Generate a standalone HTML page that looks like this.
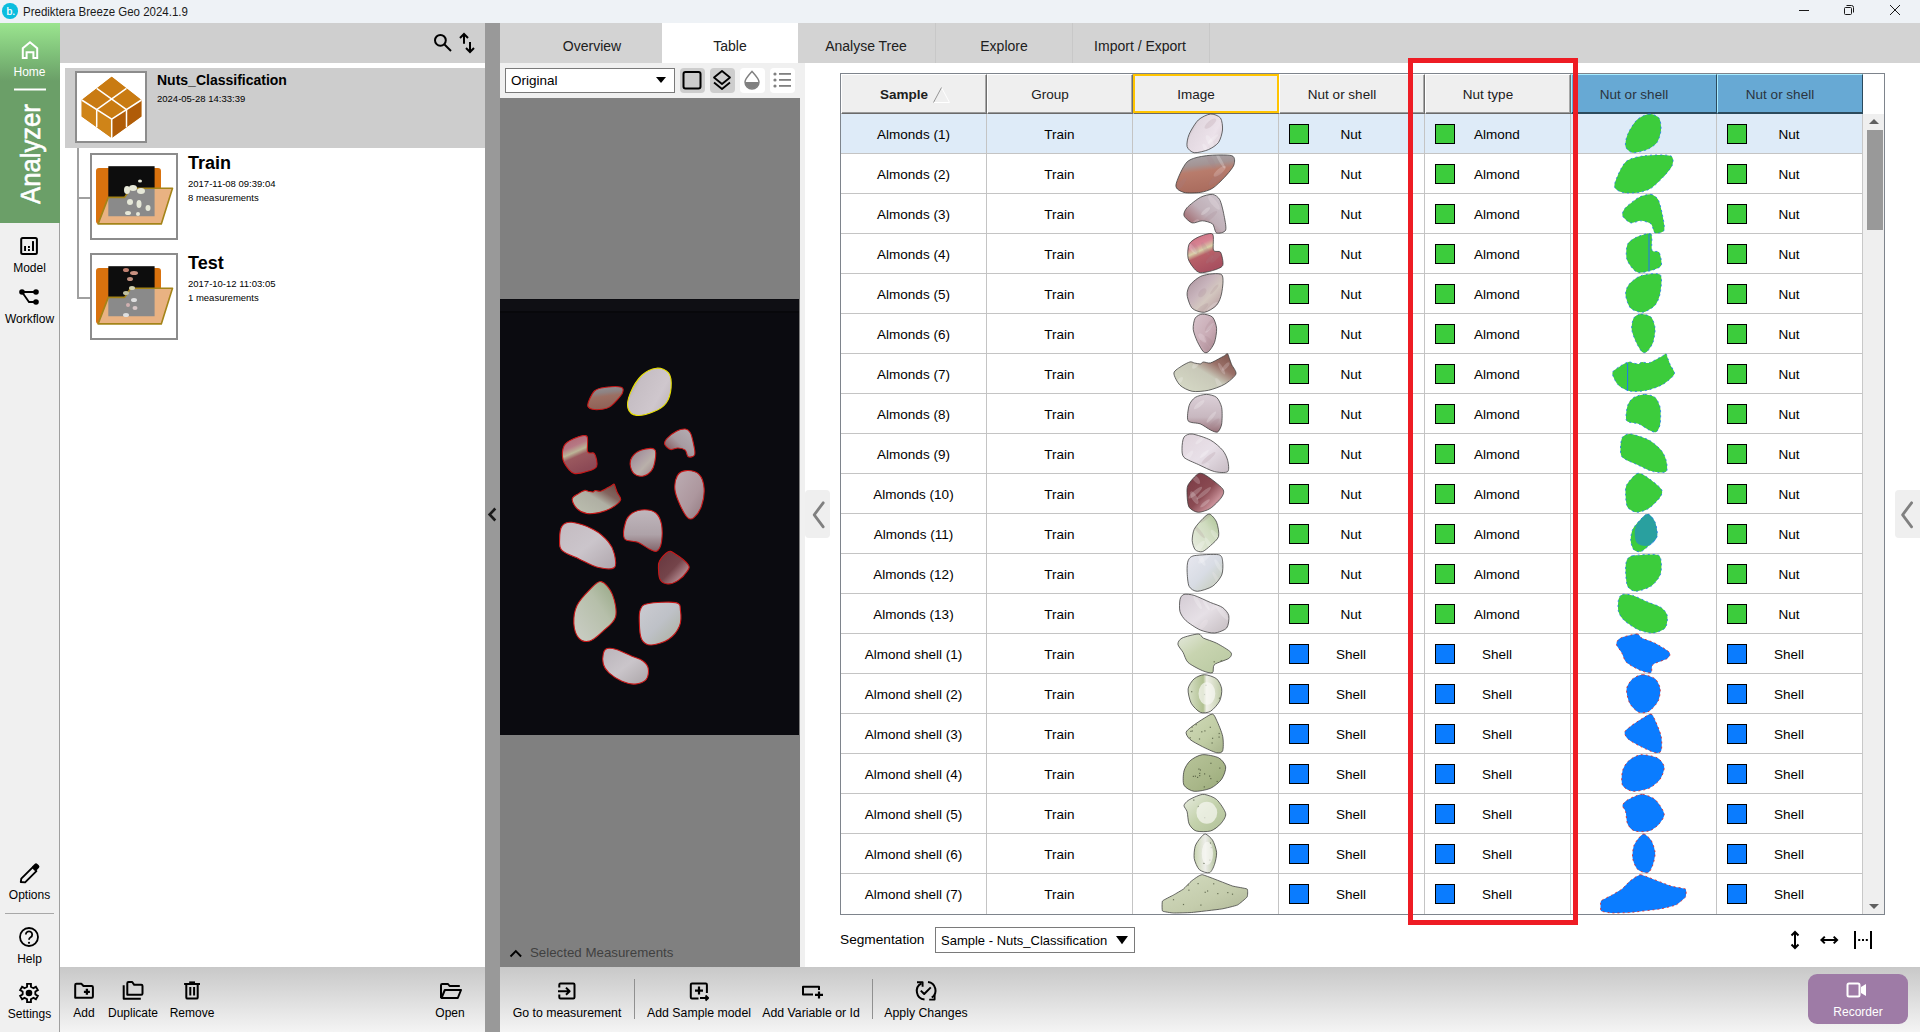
<!DOCTYPE html><html><head><meta charset="utf-8"><style>
*{box-sizing:border-box;margin:0;padding:0}
html,body{width:1920px;height:1032px;overflow:hidden;background:#fff}
body{position:relative;font-family:"Liberation Sans",sans-serif;color:#000}
.a{position:absolute}
.t{position:absolute;white-space:nowrap;line-height:1}
.c{position:absolute;white-space:nowrap;line-height:1;text-align:center}
svg{position:absolute;overflow:visible}
</style></head><body>
<div class="a" style="left:0;top:0;width:1920px;height:23px;background:#eef2f6"></div>
<div class="a" style="left:2px;top:3px;width:15.5px;height:15.5px;border-radius:50%;background:#0abdde"></div>
<div class="t" style="left:6.5px;top:5.5px;font-size:10.5px;color:#fff;-webkit-text-stroke:0.2px #fff">b.</div>
<div class="t" style="left:23.3px;top:5.5px;font-size:12.3px;color:#1a1a1a;transform:scaleX(0.935);transform-origin:0 0">Prediktera Breeze Geo 2024.1.9</div>
<svg style="left:0;top:0" width="1920" height="23"><g stroke="#1a1a1a" stroke-width="1" fill="none"><line x1="1799" y1="10.5" x2="1809" y2="10.5"/><rect x="1844.5" y="7.5" width="7" height="7" rx="1"/><path d="M1846.5,5.5 h5 a2,2 0 0 1 2,2 v5"/><line x1="1890" y1="5" x2="1900" y2="15"/><line x1="1900" y1="5" x2="1890" y2="15"/></g></svg>
<div class="a" style="left:0;top:23px;width:60px;height:1009px;background:#f0f0f0;border-right:1px solid #a0a0a0"></div>
<div class="a" style="left:0;top:23px;width:60px;height:200px;background:linear-gradient(#9be48f 0px,#80c27a 30px,#6b9f68 58px,#6b9f68 200px)"></div>
<svg style="left:0;top:0" width="60" height="230"><path d="M22.8,58 V48.3 L30,42.2 L37.2,48.3 V58 H33.4 V52.2 H26.6 V58 Z" fill="none" stroke="#fff" stroke-width="2" stroke-linejoin="miter"/><line x1="14" y1="89.5" x2="46" y2="89.5" stroke="#fff" stroke-width="2"/></svg>
<div class="c" style="left:0;top:66px;width:59px;font-size:12px;color:#fff">Home</div>
<div class="t" style="left:17px;top:204px;font-size:28px;color:#fff;-webkit-text-stroke:0.6px #fff;transform:rotate(-90deg) scaleX(0.917);transform-origin:0 0">Analyzer</div>
<svg style="left:0;top:0" width="60" height="1032" fill="none" stroke="#000"><rect x="21.2" y="238" width="15.7" height="15.9" rx="1.5" stroke-width="2"/><rect x="24.1" y="246" width="1.9" height="5" fill="#000" stroke="none"/><rect x="28" y="246" width="1.9" height="2" fill="#000" stroke="none"/><rect x="28" y="249" width="1.9" height="2" fill="#000" stroke="none"/><rect x="32" y="241.1" width="2" height="9.9" fill="#000" stroke="none"/><circle cx="22" cy="292" r="2.8" fill="#000" stroke="none"/><circle cx="36" cy="292" r="2.8" fill="#000" stroke="none"/><circle cx="36" cy="302" r="2.8" fill="#000" stroke="none"/><path d="M22,292 H36 M22,292 L29,302 H36" stroke-width="1.8"/><path d="M20.8,882 L21.3,878.6 L32.6,867.3 L36.4,871.1 L25.1,882.4 Z" stroke-width="1.9" stroke-linejoin="round"/><path d="M32,866.5 L34.6,863.9 Q36,862.5 37.4,863.9 L38.8,865.3 Q40.2,866.7 38.8,868.1 L36.2,870.7 Z" fill="#000" stroke="none"/><line x1="5" y1="913.5" x2="54" y2="913.5" stroke="#a8a8a8" stroke-width="1"/><circle cx="29" cy="937" r="9" stroke-width="1.8"/><path d="M25.8,934.5 a3.2,3.2 0 1 1 4.8,2.8 c-1.2,0.7 -1.6,1.3 -1.6,2.5" stroke-width="1.8"/><circle cx="29" cy="942.8" r="1.1" fill="#000" stroke="none"/></svg>
<svg style="left:0;top:0" width="60" height="1032"><path d="M25.85,987.54 L27.07,986.69 L27.07,983.90 L30.93,983.90 L30.93,986.69 L32.15,987.54 L33.50,988.17 L35.91,986.78 L37.84,990.13 L35.43,991.52 L35.30,993.00 L35.43,994.48 L37.84,995.87 L35.91,999.22 L33.50,997.83 L32.15,998.46 L30.93,999.31 L30.93,1002.10 L27.07,1002.10 L27.07,999.31 L25.85,998.46 L24.50,997.83 L22.09,999.22 L20.16,995.87 L22.57,994.48 L22.70,993.00 L22.57,991.52 L20.16,990.13 L22.09,986.78 L24.50,988.17Z" fill="none" stroke="#000" stroke-width="1.9" stroke-linejoin="miter"/><circle cx="29" cy="993" r="3.3" fill="#000"/></svg>
<div class="c" style="left:0;top:262px;width:59px;font-size:12px;color:#000">Model</div>
<div class="c" style="left:0;top:313px;width:59px;font-size:12px;color:#000">Workflow</div>
<div class="c" style="left:0;top:889px;width:59px;font-size:12px;color:#000">Options</div>
<div class="c" style="left:0;top:953px;width:59px;font-size:12px;color:#000">Help</div>
<div class="c" style="left:0;top:1008px;width:59px;font-size:12px;color:#000">Settings</div>
<div class="a" style="left:60px;top:23px;width:425px;height:40px;background:#cfcfcf"></div>
<svg style="left:0;top:0" width="500" height="70" fill="none" stroke="#000" stroke-width="2"><circle cx="440.4" cy="40.3" r="5.4"/><line x1="444.5" y1="44.5" x2="451" y2="51"/><path d="M464,43.8 V34 M460,38 L464,34 L468,38"/><path d="M470,42 V52 M466,48 L470,52 L474,48"/></svg>
<div class="a" style="left:65px;top:68px;width:420px;height:80px;background:#cdcdcd"></div>
<div class="a" style="left:77px;top:148px;width:2px;height:151px;background:#a0a0a0"></div>
<div class="a" style="left:77px;top:197px;width:14px;height:2px;background:#a0a0a0"></div>
<div class="a" style="left:77px;top:297px;width:14px;height:2px;background:#a0a0a0"></div>
<div class="a" style="left:75px;top:71px;width:72px;height:72px;background:#fff;border:2px solid #8c8c8c"></div>
<svg style="left:75px;top:71px" width="72" height="72" viewBox="0 0 72 72"><path d="M36.7,5.8 L66.4,29 L66.4,45.6 L36.7,67 L6.7,45.6 L6.7,29 Z" fill="#c87a14"/><path d="M6.7,29 L36.7,48.2 L66.4,29 L36.7,5.8 Z" fill="#c97b12"/><path d="M36.7,48.2 L66.4,29 L66.4,45.6 L36.7,67 Z" fill="#b05c08"/><path d="M6.7,29 L36.7,48.2 L36.7,67 L6.7,45.6 Z" fill="#cf8418"/><g stroke="#fff" stroke-width="1.5" fill="none"><path d="M6.7,29 L36.7,48.2 L66.4,29"/><path d="M36.7,48.2 V67"/><path d="M21.7,17.4 L51.5,38.6"/><path d="M51.5,17.4 L21.7,38.6"/><path d="M21.7,38.6 V56.3"/><path d="M51.5,38.6 V56.3"/></g></svg>
<div class="t" style="left:157px;top:73px;font-size:14px;font-weight:bold;color:#000">Nuts_Classification</div>
<div class="t" style="left:157px;top:94px;font-size:9.5px;color:#000">2024-05-28 14:33:39</div>
<div class="a" style="left:90px;top:153px;width:88px;height:87px;background:#fff;border:2px solid #8c8c8c"></div><svg style="left:90px;top:153px" width="88" height="87"><rect x="6" y="15" width="65" height="56" rx="3" fill="#d9720e"/><rect x="18.3" y="13.2" width="46.3" height="50.1" fill="#0d0d0d"/><path d="M8.1,70.9 L18.3,44.4 L34.6,44.4 L40.7,35.2 L82.5,35.2 L71.3,70.9 Z" fill="#e9b282"/><path d="M18.3,44.4 L34.6,44.4 L40.7,35.2 L64.6,35.2 L64.6,63.3 L18.3,63.3 Z" fill="#8a8a8a"/><path d="M8.1,70.9 L18.3,44.4 L34.6,44.4 L40.7,35.2 L82.5,35.2 L71.3,70.9 Z" fill="none" stroke="#a48418" stroke-width="1.6" stroke-linejoin="round"/><g fill="#e6e8d8"><ellipse cx="37" cy="37" rx="3" ry="4"/><ellipse cx="43" cy="35" rx="4" ry="3"/><ellipse cx="51" cy="38" rx="4" ry="3"/><ellipse cx="50" cy="28" rx="2" ry="1.5"/><ellipse cx="40" cy="49" rx="3" ry="3"/><ellipse cx="49" cy="51" rx="2.5" ry="4"/><ellipse cx="58" cy="55" rx="2.5" ry="3"/><ellipse cx="38" cy="60" rx="3" ry="2"/><ellipse cx="48" cy="61" rx="2" ry="2"/></g></svg>
<div class="a" style="left:90px;top:253px;width:88px;height:87px;background:#fff;border:2px solid #8c8c8c"></div><svg style="left:90px;top:253px" width="88" height="87"><rect x="6" y="15" width="65" height="56" rx="3" fill="#d9720e"/><rect x="18.3" y="13.2" width="46.3" height="50.1" fill="#0d0d0d"/><path d="M8.1,70.9 L18.3,44.4 L34.6,44.4 L40.7,35.2 L82.5,35.2 L71.3,70.9 Z" fill="#e9b282"/><path d="M18.3,44.4 L34.6,44.4 L40.7,35.2 L64.6,35.2 L64.6,63.3 L18.3,63.3 Z" fill="#8a8a8a"/><path d="M8.1,70.9 L18.3,44.4 L34.6,44.4 L40.7,35.2 L82.5,35.2 L71.3,70.9 Z" fill="none" stroke="#a48418" stroke-width="1.6" stroke-linejoin="round"/><g><ellipse cx="36" cy="17" rx="3" ry="2" fill="#c08070"/><ellipse cx="44" cy="20" rx="4" ry="2" fill="#c89080"/><ellipse cx="40" cy="26" rx="3" ry="2" fill="#c09080"/><ellipse cx="42" cy="35" rx="3" ry="2" fill="#d0d0b0"/><ellipse cx="36" cy="40" rx="3" ry="2" fill="#c0c0a0"/><ellipse cx="44" cy="47" rx="3" ry="2" fill="#e0e0e0"/><ellipse cx="38" cy="52" rx="2" ry="2" fill="#d0b0b0"/><ellipse cx="45" cy="55" rx="2.5" ry="2" fill="#d8c8c8"/><ellipse cx="36" cy="62" rx="3" ry="2" fill="#e0e0e0"/></g></svg>
<div class="t" style="left:188px;top:154px;font-size:18px;font-weight:bold;color:#000">Train</div>
<div class="t" style="left:188px;top:179px;font-size:9.5px;color:#000">2017-11-08 09:39:04</div>
<div class="t" style="left:188px;top:193px;font-size:9.5px;color:#000">8 measurements</div>
<div class="t" style="left:188px;top:254px;font-size:18px;font-weight:bold;color:#000">Test</div>
<div class="t" style="left:188px;top:279px;font-size:9.5px;color:#000">2017-10-12 11:03:05</div>
<div class="t" style="left:188px;top:293px;font-size:9.5px;color:#000">1 measurements</div>
<div class="a" style="left:485px;top:23px;width:15px;height:1009px;background:#999999"></div>
<svg style="left:0;top:0" width="500" height="1032"><path d="M495.3,508.5 L489.6,514.5 L495.3,520.5" fill="none" stroke="#1a1a1a" stroke-width="2.6"/></svg>
<div class="a" style="left:500px;top:23px;width:1420px;height:40px;background:#d3d3d3"></div>
<div class="a" style="left:662px;top:23px;width:136px;height:40px;background:#fff"></div>
<div class="a" style="left:935px;top:23px;width:1px;height:40px;background:#c8c8c8"></div>
<div class="a" style="left:1072px;top:23px;width:1px;height:40px;background:#c8c8c8"></div>
<div class="a" style="left:1209px;top:23px;width:1px;height:40px;background:#c8c8c8"></div>
<div class="c" style="left:492px;top:39px;width:200px;font-size:14px;color:#202020">Overview</div>
<div class="c" style="left:630px;top:39px;width:200px;font-size:14px;color:#202020">Table</div>
<div class="c" style="left:766px;top:39px;width:200px;font-size:14px;color:#202020">Analyse Tree</div>
<div class="c" style="left:904px;top:39px;width:200px;font-size:14px;color:#202020">Explore</div>
<div class="c" style="left:1040px;top:39px;width:200px;font-size:14px;color:#202020">Import / Export</div>
<div class="a" style="left:500px;top:63px;width:305px;height:35px;background:#f0f0f0"></div>
<div class="a" style="left:500px;top:98px;width:300px;height:869px;background:#808080"></div>
<div class="a" style="left:800px;top:98px;width:5px;height:869px;background:#f0f0f0"></div>
<div class="a" style="left:505px;top:68px;width:170px;height:25px;background:#fff;border:1px solid #7a7a7a"></div>
<div class="t" style="left:511px;top:74px;font-size:13.5px;color:#000">Original</div>
<svg style="left:0;top:0" width="800" height="100"><path d="M656,77 L666,77 L661,83 Z" fill="#000"/></svg>
<div class="a" style="left:680px;top:68px;width:25px;height:25px;border-radius:4px;background:#cdcdcd"></div>
<div class="a" style="left:710px;top:68px;width:25px;height:25px;border-radius:4px;background:#cdcdcd"></div>
<div class="a" style="left:740px;top:68px;width:25px;height:25px;border-radius:4px;background:#fff"></div>
<div class="a" style="left:770px;top:68px;width:25px;height:25px;border-radius:4px;background:#fff"></div>
<svg style="left:0;top:0" width="800" height="100"><rect x="683.5" y="72" width="17" height="16.5" rx="2" fill="#cdcdcd" stroke="#000" stroke-width="2"/><path d="M714,77.5 L722,71 L730,77.5 L722,84 Z" fill="none" stroke="#000" stroke-width="1.8" stroke-linejoin="round"/><path d="M714,82.5 L722,89 L730,82.5" fill="none" stroke="#000" stroke-width="1.8" stroke-linejoin="round"/><path d="M752,71.5 C748,76 745,79 745,82 A7,7 0 0 0 759,82 C759,79 756,76 752,71.5 Z" fill="none" stroke="#808080" stroke-width="1.5"/><path d="M745.2,82 A6.8,6.8 0 0 0 758.8,82 Z" fill="#808080"/><g fill="#808080"><circle cx="775" cy="74" r="1.6"/><circle cx="775" cy="80" r="1.6"/><circle cx="775" cy="86" r="1.6"/><rect x="779" y="73" width="12" height="1.8"/><rect x="779" y="79" width="12" height="1.8"/><rect x="779" y="85" width="12" height="1.8"/></g></svg>
<div class="a" style="left:500px;top:299px;width:299px;height:436px;background:#0b0b10"></div>
<div class="a" style="left:500px;top:300px;width:299px;height:11px;background:#0f0f14"></div>
<div class="a" style="left:500px;top:311px;width:299px;height:2px;background:#08080b"></div>
<svg style="left:0;top:0" width="800" height="1000"><path d="M510.5,956.5 L515.8,951.2 L521.1,956.5" fill="none" stroke="#000" stroke-width="1.9"/></svg>
<div class="t" style="left:530px;top:946px;font-size:13.3px;color:#404040">Selected Measurements</div>
<div class="a" style="left:805px;top:490px;width:25px;height:48px;border-radius:4px;background:#efefef"></div>
<svg style="left:0;top:0" width="1920" height="1032"><path d="M823.2,502.8 L814.2,514.8 L823.2,526.8" fill="none" stroke="#808080" stroke-width="2.8" stroke-linecap="round" stroke-linejoin="round"/></svg>
<div class="a" style="left:1895px;top:490px;width:30px;height:48px;border-radius:4px;background:#efefef"></div>
<svg style="left:0;top:0" width="1920" height="1032"><path d="M1911.6,502.8 L1902.6,514.8 L1911.6,526.8" fill="none" stroke="#808080" stroke-width="2.8" stroke-linecap="round" stroke-linejoin="round"/></svg>
<div class="a" style="left:840px;top:73px;width:1045px;height:842px;border:1px solid #7e848c;background:#fff"></div>
<div class="a" style="left:841px;top:114px;width:1021px;height:39px;background:#deebf8"></div>
<div class="a" style="left:841px;top:153px;width:1021px;height:1px;background:#c4c4c4"></div>
<div class="a" style="left:841px;top:193px;width:1021px;height:1px;background:#c4c4c4"></div>
<div class="a" style="left:841px;top:233px;width:1021px;height:1px;background:#c4c4c4"></div>
<div class="a" style="left:841px;top:273px;width:1021px;height:1px;background:#c4c4c4"></div>
<div class="a" style="left:841px;top:313px;width:1021px;height:1px;background:#c4c4c4"></div>
<div class="a" style="left:841px;top:353px;width:1021px;height:1px;background:#c4c4c4"></div>
<div class="a" style="left:841px;top:393px;width:1021px;height:1px;background:#c4c4c4"></div>
<div class="a" style="left:841px;top:433px;width:1021px;height:1px;background:#c4c4c4"></div>
<div class="a" style="left:841px;top:473px;width:1021px;height:1px;background:#c4c4c4"></div>
<div class="a" style="left:841px;top:513px;width:1021px;height:1px;background:#c4c4c4"></div>
<div class="a" style="left:841px;top:553px;width:1021px;height:1px;background:#c4c4c4"></div>
<div class="a" style="left:841px;top:593px;width:1021px;height:1px;background:#c4c4c4"></div>
<div class="a" style="left:841px;top:633px;width:1021px;height:1px;background:#c4c4c4"></div>
<div class="a" style="left:841px;top:673px;width:1021px;height:1px;background:#c4c4c4"></div>
<div class="a" style="left:841px;top:713px;width:1021px;height:1px;background:#c4c4c4"></div>
<div class="a" style="left:841px;top:753px;width:1021px;height:1px;background:#c4c4c4"></div>
<div class="a" style="left:841px;top:793px;width:1021px;height:1px;background:#c4c4c4"></div>
<div class="a" style="left:841px;top:833px;width:1021px;height:1px;background:#c4c4c4"></div>
<div class="a" style="left:841px;top:873px;width:1021px;height:1px;background:#c4c4c4"></div>
<div class="a" style="left:986px;top:114px;width:1px;height:800px;background:#c4c4c4"></div>
<div class="a" style="left:1132px;top:114px;width:1px;height:800px;background:#c4c4c4"></div>
<div class="a" style="left:1278px;top:114px;width:1px;height:800px;background:#c4c4c4"></div>
<div class="a" style="left:1424px;top:114px;width:1px;height:800px;background:#c4c4c4"></div>
<div class="a" style="left:1570px;top:114px;width:1px;height:800px;background:#c4c4c4"></div>
<div class="a" style="left:1716px;top:114px;width:1px;height:800px;background:#c4c4c4"></div>
<div class="a" style="left:1862px;top:114px;width:1px;height:800px;background:#c4c4c4"></div>
<div class="a" style="left:1862px;top:114px;width:22px;height:800px;background:#efefef;border-left:1px solid #c8c8c8"></div>
<div class="a" style="left:1867px;top:130px;width:16px;height:100px;background:#999999"></div>
<svg style="left:0;top:0" width="1920" height="1032"><path d="M1869,124 L1874,119 L1879,124 Z" fill="#606060"/><path d="M1869,904 L1874,909 L1879,904 Z" fill="#606060"/></svg>
<div class="a" style="left:841px;top:74px;width:146px;height:40px;background:#efefef;border-top:1px solid #fff;border-left:1px solid #fff;border-right:1px solid #6e6e6e;border-bottom:1px solid #6a6a6a"></div><div class="a" style="left:985px;top:75px;width:1px;height:37px;background:#a8a8a8"></div><div class="a" style="left:842px;top:112px;width:144px;height:1px;background:#9a9a9a"></div><div class="c" style="left:831px;top:88px;width:146px;font-size:13.5px;font-weight:bold;color:#202020">Sample</div>
<svg style="left:0;top:0" width="1920" height="200"><path d="M933.5,102.5 L941.5,87.5 L949.5,102.5 Z" fill="none" stroke="#fff" stroke-width="1"/><path d="M933.5,102.5 L941.5,87.5" fill="none" stroke="#909090" stroke-width="1"/></svg>
<div class="a" style="left:987px;top:74px;width:146px;height:40px;background:#efefef;border-top:1px solid #fff;border-left:1px solid #fff;border-right:1px solid #6e6e6e;border-bottom:1px solid #6a6a6a"></div><div class="a" style="left:1131px;top:75px;width:1px;height:37px;background:#a8a8a8"></div><div class="a" style="left:988px;top:112px;width:144px;height:1px;background:#9a9a9a"></div><div class="c" style="left:977px;top:88px;width:146px;font-size:13.5px;color:#202020">Group</div>
<div class="a" style="left:1133px;top:74px;width:146px;height:40px;background:#efefef;border-top:1px solid #fff;border-left:1px solid #fff;border-right:1px solid #6e6e6e;border-bottom:1px solid #6a6a6a"></div><div class="a" style="left:1277px;top:75px;width:1px;height:37px;background:#a8a8a8"></div><div class="a" style="left:1134px;top:112px;width:144px;height:1px;background:#9a9a9a"></div><div class="a" style="left:1133px;top:74px;width:146px;height:39px;border:2px solid #ffc400"></div><div class="c" style="left:1123px;top:88px;width:146px;font-size:13.5px;color:#202020">Image</div>
<div class="a" style="left:1279px;top:74px;width:146px;height:40px;background:#efefef;border-top:1px solid #fff;border-left:1px solid #fff;border-right:1px solid #6e6e6e;border-bottom:1px solid #6a6a6a"></div><div class="a" style="left:1423px;top:75px;width:1px;height:37px;background:#a8a8a8"></div><div class="a" style="left:1280px;top:112px;width:144px;height:1px;background:#9a9a9a"></div><div class="c" style="left:1269px;top:88px;width:146px;font-size:13.5px;color:#202020">Nut or shell</div>
<div class="a" style="left:1425px;top:74px;width:146px;height:40px;background:#efefef;border-top:1px solid #fff;border-left:1px solid #fff;border-right:1px solid #6e6e6e;border-bottom:1px solid #6a6a6a"></div><div class="a" style="left:1569px;top:75px;width:1px;height:37px;background:#a8a8a8"></div><div class="a" style="left:1426px;top:112px;width:144px;height:1px;background:#9a9a9a"></div><div class="c" style="left:1415px;top:88px;width:146px;font-size:13.5px;color:#202020">Nut type</div>
<div class="a" style="left:1571px;top:74px;width:146px;height:40px;background:#67a9d4;border-top:1px solid #a8ecff;border-left:1px solid #a8ecff;border-right:1px solid #2c4a5c;border-bottom:2px solid #2c4a5c"></div><div class="c" style="left:1561px;top:88px;width:146px;font-size:13.5px;color:#2a3440">Nut or shell</div>
<div class="a" style="left:1717px;top:74px;width:146px;height:40px;background:#67a9d4;border-top:1px solid #a8ecff;border-left:1px solid #a8ecff;border-right:1px solid #2c4a5c;border-bottom:2px solid #2c4a5c"></div><div class="c" style="left:1707px;top:88px;width:146px;font-size:13.5px;color:#2a3440">Nut or shell</div>
<div class="c" style="left:841px;top:128px;width:145px;font-size:13.5px">Almonds (1)</div>
<div class="c" style="left:987px;top:128px;width:145px;font-size:13.5px">Train</div>
<div class="a" style="left:1289px;top:124px;width:20px;height:20px;background:#3ccc3c;border:1px solid #000"></div>
<div class="c" style="left:1278px;top:128px;width:146px;font-size:13.5px">Nut</div>
<div class="a" style="left:1435px;top:124px;width:20px;height:20px;background:#3ccc3c;border:1px solid #000"></div>
<div class="c" style="left:1424px;top:128px;width:146px;font-size:13.5px">Almond</div>
<div class="a" style="left:1727px;top:124px;width:20px;height:20px;background:#3ccc3c;border:1px solid #000"></div>
<div class="c" style="left:1716px;top:128px;width:146px;font-size:13.5px">Nut</div>
<div class="c" style="left:841px;top:168px;width:145px;font-size:13.5px">Almonds (2)</div>
<div class="c" style="left:987px;top:168px;width:145px;font-size:13.5px">Train</div>
<div class="a" style="left:1289px;top:164px;width:20px;height:20px;background:#3ccc3c;border:1px solid #000"></div>
<div class="c" style="left:1278px;top:168px;width:146px;font-size:13.5px">Nut</div>
<div class="a" style="left:1435px;top:164px;width:20px;height:20px;background:#3ccc3c;border:1px solid #000"></div>
<div class="c" style="left:1424px;top:168px;width:146px;font-size:13.5px">Almond</div>
<div class="a" style="left:1727px;top:164px;width:20px;height:20px;background:#3ccc3c;border:1px solid #000"></div>
<div class="c" style="left:1716px;top:168px;width:146px;font-size:13.5px">Nut</div>
<div class="c" style="left:841px;top:208px;width:145px;font-size:13.5px">Almonds (3)</div>
<div class="c" style="left:987px;top:208px;width:145px;font-size:13.5px">Train</div>
<div class="a" style="left:1289px;top:204px;width:20px;height:20px;background:#3ccc3c;border:1px solid #000"></div>
<div class="c" style="left:1278px;top:208px;width:146px;font-size:13.5px">Nut</div>
<div class="a" style="left:1435px;top:204px;width:20px;height:20px;background:#3ccc3c;border:1px solid #000"></div>
<div class="c" style="left:1424px;top:208px;width:146px;font-size:13.5px">Almond</div>
<div class="a" style="left:1727px;top:204px;width:20px;height:20px;background:#3ccc3c;border:1px solid #000"></div>
<div class="c" style="left:1716px;top:208px;width:146px;font-size:13.5px">Nut</div>
<div class="c" style="left:841px;top:248px;width:145px;font-size:13.5px">Almonds (4)</div>
<div class="c" style="left:987px;top:248px;width:145px;font-size:13.5px">Train</div>
<div class="a" style="left:1289px;top:244px;width:20px;height:20px;background:#3ccc3c;border:1px solid #000"></div>
<div class="c" style="left:1278px;top:248px;width:146px;font-size:13.5px">Nut</div>
<div class="a" style="left:1435px;top:244px;width:20px;height:20px;background:#3ccc3c;border:1px solid #000"></div>
<div class="c" style="left:1424px;top:248px;width:146px;font-size:13.5px">Almond</div>
<div class="a" style="left:1727px;top:244px;width:20px;height:20px;background:#3ccc3c;border:1px solid #000"></div>
<div class="c" style="left:1716px;top:248px;width:146px;font-size:13.5px">Nut</div>
<div class="c" style="left:841px;top:288px;width:145px;font-size:13.5px">Almonds (5)</div>
<div class="c" style="left:987px;top:288px;width:145px;font-size:13.5px">Train</div>
<div class="a" style="left:1289px;top:284px;width:20px;height:20px;background:#3ccc3c;border:1px solid #000"></div>
<div class="c" style="left:1278px;top:288px;width:146px;font-size:13.5px">Nut</div>
<div class="a" style="left:1435px;top:284px;width:20px;height:20px;background:#3ccc3c;border:1px solid #000"></div>
<div class="c" style="left:1424px;top:288px;width:146px;font-size:13.5px">Almond</div>
<div class="a" style="left:1727px;top:284px;width:20px;height:20px;background:#3ccc3c;border:1px solid #000"></div>
<div class="c" style="left:1716px;top:288px;width:146px;font-size:13.5px">Nut</div>
<div class="c" style="left:841px;top:328px;width:145px;font-size:13.5px">Almonds (6)</div>
<div class="c" style="left:987px;top:328px;width:145px;font-size:13.5px">Train</div>
<div class="a" style="left:1289px;top:324px;width:20px;height:20px;background:#3ccc3c;border:1px solid #000"></div>
<div class="c" style="left:1278px;top:328px;width:146px;font-size:13.5px">Nut</div>
<div class="a" style="left:1435px;top:324px;width:20px;height:20px;background:#3ccc3c;border:1px solid #000"></div>
<div class="c" style="left:1424px;top:328px;width:146px;font-size:13.5px">Almond</div>
<div class="a" style="left:1727px;top:324px;width:20px;height:20px;background:#3ccc3c;border:1px solid #000"></div>
<div class="c" style="left:1716px;top:328px;width:146px;font-size:13.5px">Nut</div>
<div class="c" style="left:841px;top:368px;width:145px;font-size:13.5px">Almonds (7)</div>
<div class="c" style="left:987px;top:368px;width:145px;font-size:13.5px">Train</div>
<div class="a" style="left:1289px;top:364px;width:20px;height:20px;background:#3ccc3c;border:1px solid #000"></div>
<div class="c" style="left:1278px;top:368px;width:146px;font-size:13.5px">Nut</div>
<div class="a" style="left:1435px;top:364px;width:20px;height:20px;background:#3ccc3c;border:1px solid #000"></div>
<div class="c" style="left:1424px;top:368px;width:146px;font-size:13.5px">Almond</div>
<div class="a" style="left:1727px;top:364px;width:20px;height:20px;background:#3ccc3c;border:1px solid #000"></div>
<div class="c" style="left:1716px;top:368px;width:146px;font-size:13.5px">Nut</div>
<div class="c" style="left:841px;top:408px;width:145px;font-size:13.5px">Almonds (8)</div>
<div class="c" style="left:987px;top:408px;width:145px;font-size:13.5px">Train</div>
<div class="a" style="left:1289px;top:404px;width:20px;height:20px;background:#3ccc3c;border:1px solid #000"></div>
<div class="c" style="left:1278px;top:408px;width:146px;font-size:13.5px">Nut</div>
<div class="a" style="left:1435px;top:404px;width:20px;height:20px;background:#3ccc3c;border:1px solid #000"></div>
<div class="c" style="left:1424px;top:408px;width:146px;font-size:13.5px">Almond</div>
<div class="a" style="left:1727px;top:404px;width:20px;height:20px;background:#3ccc3c;border:1px solid #000"></div>
<div class="c" style="left:1716px;top:408px;width:146px;font-size:13.5px">Nut</div>
<div class="c" style="left:841px;top:448px;width:145px;font-size:13.5px">Almonds (9)</div>
<div class="c" style="left:987px;top:448px;width:145px;font-size:13.5px">Train</div>
<div class="a" style="left:1289px;top:444px;width:20px;height:20px;background:#3ccc3c;border:1px solid #000"></div>
<div class="c" style="left:1278px;top:448px;width:146px;font-size:13.5px">Nut</div>
<div class="a" style="left:1435px;top:444px;width:20px;height:20px;background:#3ccc3c;border:1px solid #000"></div>
<div class="c" style="left:1424px;top:448px;width:146px;font-size:13.5px">Almond</div>
<div class="a" style="left:1727px;top:444px;width:20px;height:20px;background:#3ccc3c;border:1px solid #000"></div>
<div class="c" style="left:1716px;top:448px;width:146px;font-size:13.5px">Nut</div>
<div class="c" style="left:841px;top:488px;width:145px;font-size:13.5px">Almonds (10)</div>
<div class="c" style="left:987px;top:488px;width:145px;font-size:13.5px">Train</div>
<div class="a" style="left:1289px;top:484px;width:20px;height:20px;background:#3ccc3c;border:1px solid #000"></div>
<div class="c" style="left:1278px;top:488px;width:146px;font-size:13.5px">Nut</div>
<div class="a" style="left:1435px;top:484px;width:20px;height:20px;background:#3ccc3c;border:1px solid #000"></div>
<div class="c" style="left:1424px;top:488px;width:146px;font-size:13.5px">Almond</div>
<div class="a" style="left:1727px;top:484px;width:20px;height:20px;background:#3ccc3c;border:1px solid #000"></div>
<div class="c" style="left:1716px;top:488px;width:146px;font-size:13.5px">Nut</div>
<div class="c" style="left:841px;top:528px;width:145px;font-size:13.5px">Almonds (11)</div>
<div class="c" style="left:987px;top:528px;width:145px;font-size:13.5px">Train</div>
<div class="a" style="left:1289px;top:524px;width:20px;height:20px;background:#3ccc3c;border:1px solid #000"></div>
<div class="c" style="left:1278px;top:528px;width:146px;font-size:13.5px">Nut</div>
<div class="a" style="left:1435px;top:524px;width:20px;height:20px;background:#3ccc3c;border:1px solid #000"></div>
<div class="c" style="left:1424px;top:528px;width:146px;font-size:13.5px">Almond</div>
<div class="a" style="left:1727px;top:524px;width:20px;height:20px;background:#3ccc3c;border:1px solid #000"></div>
<div class="c" style="left:1716px;top:528px;width:146px;font-size:13.5px">Nut</div>
<div class="c" style="left:841px;top:568px;width:145px;font-size:13.5px">Almonds (12)</div>
<div class="c" style="left:987px;top:568px;width:145px;font-size:13.5px">Train</div>
<div class="a" style="left:1289px;top:564px;width:20px;height:20px;background:#3ccc3c;border:1px solid #000"></div>
<div class="c" style="left:1278px;top:568px;width:146px;font-size:13.5px">Nut</div>
<div class="a" style="left:1435px;top:564px;width:20px;height:20px;background:#3ccc3c;border:1px solid #000"></div>
<div class="c" style="left:1424px;top:568px;width:146px;font-size:13.5px">Almond</div>
<div class="a" style="left:1727px;top:564px;width:20px;height:20px;background:#3ccc3c;border:1px solid #000"></div>
<div class="c" style="left:1716px;top:568px;width:146px;font-size:13.5px">Nut</div>
<div class="c" style="left:841px;top:608px;width:145px;font-size:13.5px">Almonds (13)</div>
<div class="c" style="left:987px;top:608px;width:145px;font-size:13.5px">Train</div>
<div class="a" style="left:1289px;top:604px;width:20px;height:20px;background:#3ccc3c;border:1px solid #000"></div>
<div class="c" style="left:1278px;top:608px;width:146px;font-size:13.5px">Nut</div>
<div class="a" style="left:1435px;top:604px;width:20px;height:20px;background:#3ccc3c;border:1px solid #000"></div>
<div class="c" style="left:1424px;top:608px;width:146px;font-size:13.5px">Almond</div>
<div class="a" style="left:1727px;top:604px;width:20px;height:20px;background:#3ccc3c;border:1px solid #000"></div>
<div class="c" style="left:1716px;top:608px;width:146px;font-size:13.5px">Nut</div>
<div class="c" style="left:841px;top:648px;width:145px;font-size:13.5px">Almond shell (1)</div>
<div class="c" style="left:987px;top:648px;width:145px;font-size:13.5px">Train</div>
<div class="a" style="left:1289px;top:644px;width:20px;height:20px;background:#0a7cff;border:1px solid #000"></div>
<div class="c" style="left:1278px;top:648px;width:146px;font-size:13.5px">Shell</div>
<div class="a" style="left:1435px;top:644px;width:20px;height:20px;background:#0a7cff;border:1px solid #000"></div>
<div class="c" style="left:1424px;top:648px;width:146px;font-size:13.5px">Shell</div>
<div class="a" style="left:1727px;top:644px;width:20px;height:20px;background:#0a7cff;border:1px solid #000"></div>
<div class="c" style="left:1716px;top:648px;width:146px;font-size:13.5px">Shell</div>
<div class="c" style="left:841px;top:688px;width:145px;font-size:13.5px">Almond shell (2)</div>
<div class="c" style="left:987px;top:688px;width:145px;font-size:13.5px">Train</div>
<div class="a" style="left:1289px;top:684px;width:20px;height:20px;background:#0a7cff;border:1px solid #000"></div>
<div class="c" style="left:1278px;top:688px;width:146px;font-size:13.5px">Shell</div>
<div class="a" style="left:1435px;top:684px;width:20px;height:20px;background:#0a7cff;border:1px solid #000"></div>
<div class="c" style="left:1424px;top:688px;width:146px;font-size:13.5px">Shell</div>
<div class="a" style="left:1727px;top:684px;width:20px;height:20px;background:#0a7cff;border:1px solid #000"></div>
<div class="c" style="left:1716px;top:688px;width:146px;font-size:13.5px">Shell</div>
<div class="c" style="left:841px;top:728px;width:145px;font-size:13.5px">Almond shell (3)</div>
<div class="c" style="left:987px;top:728px;width:145px;font-size:13.5px">Train</div>
<div class="a" style="left:1289px;top:724px;width:20px;height:20px;background:#0a7cff;border:1px solid #000"></div>
<div class="c" style="left:1278px;top:728px;width:146px;font-size:13.5px">Shell</div>
<div class="a" style="left:1435px;top:724px;width:20px;height:20px;background:#0a7cff;border:1px solid #000"></div>
<div class="c" style="left:1424px;top:728px;width:146px;font-size:13.5px">Shell</div>
<div class="a" style="left:1727px;top:724px;width:20px;height:20px;background:#0a7cff;border:1px solid #000"></div>
<div class="c" style="left:1716px;top:728px;width:146px;font-size:13.5px">Shell</div>
<div class="c" style="left:841px;top:768px;width:145px;font-size:13.5px">Almond shell (4)</div>
<div class="c" style="left:987px;top:768px;width:145px;font-size:13.5px">Train</div>
<div class="a" style="left:1289px;top:764px;width:20px;height:20px;background:#0a7cff;border:1px solid #000"></div>
<div class="c" style="left:1278px;top:768px;width:146px;font-size:13.5px">Shell</div>
<div class="a" style="left:1435px;top:764px;width:20px;height:20px;background:#0a7cff;border:1px solid #000"></div>
<div class="c" style="left:1424px;top:768px;width:146px;font-size:13.5px">Shell</div>
<div class="a" style="left:1727px;top:764px;width:20px;height:20px;background:#0a7cff;border:1px solid #000"></div>
<div class="c" style="left:1716px;top:768px;width:146px;font-size:13.5px">Shell</div>
<div class="c" style="left:841px;top:808px;width:145px;font-size:13.5px">Almond shell (5)</div>
<div class="c" style="left:987px;top:808px;width:145px;font-size:13.5px">Train</div>
<div class="a" style="left:1289px;top:804px;width:20px;height:20px;background:#0a7cff;border:1px solid #000"></div>
<div class="c" style="left:1278px;top:808px;width:146px;font-size:13.5px">Shell</div>
<div class="a" style="left:1435px;top:804px;width:20px;height:20px;background:#0a7cff;border:1px solid #000"></div>
<div class="c" style="left:1424px;top:808px;width:146px;font-size:13.5px">Shell</div>
<div class="a" style="left:1727px;top:804px;width:20px;height:20px;background:#0a7cff;border:1px solid #000"></div>
<div class="c" style="left:1716px;top:808px;width:146px;font-size:13.5px">Shell</div>
<div class="c" style="left:841px;top:848px;width:145px;font-size:13.5px">Almond shell (6)</div>
<div class="c" style="left:987px;top:848px;width:145px;font-size:13.5px">Train</div>
<div class="a" style="left:1289px;top:844px;width:20px;height:20px;background:#0a7cff;border:1px solid #000"></div>
<div class="c" style="left:1278px;top:848px;width:146px;font-size:13.5px">Shell</div>
<div class="a" style="left:1435px;top:844px;width:20px;height:20px;background:#0a7cff;border:1px solid #000"></div>
<div class="c" style="left:1424px;top:848px;width:146px;font-size:13.5px">Shell</div>
<div class="a" style="left:1727px;top:844px;width:20px;height:20px;background:#0a7cff;border:1px solid #000"></div>
<div class="c" style="left:1716px;top:848px;width:146px;font-size:13.5px">Shell</div>
<div class="c" style="left:841px;top:888px;width:145px;font-size:13.5px">Almond shell (7)</div>
<div class="c" style="left:987px;top:888px;width:145px;font-size:13.5px">Train</div>
<div class="a" style="left:1289px;top:884px;width:20px;height:20px;background:#0a7cff;border:1px solid #000"></div>
<div class="c" style="left:1278px;top:888px;width:146px;font-size:13.5px">Shell</div>
<div class="a" style="left:1435px;top:884px;width:20px;height:20px;background:#0a7cff;border:1px solid #000"></div>
<div class="c" style="left:1424px;top:888px;width:146px;font-size:13.5px">Shell</div>
<div class="a" style="left:1727px;top:884px;width:20px;height:20px;background:#0a7cff;border:1px solid #000"></div>
<div class="c" style="left:1716px;top:888px;width:146px;font-size:13.5px">Shell</div>
<svg style="left:0;top:0" width="1920" height="1032"><defs><linearGradient id="g0" x1="0" y1="0.2" x2="1" y2="0.8"><stop offset="0" stop-color="#a8a0a6"/><stop offset="0.25" stop-color="#e2d8e0"/><stop offset="0.7" stop-color="#ece2ea"/><stop offset="1" stop-color="#d8ccd4"/></linearGradient><linearGradient id="gi0" x1="0" y1="0.2" x2="1" y2="0.8"><stop offset="0" stop-color="#938d91"/><stop offset="0.25" stop-color="#c6bec4"/><stop offset="0.7" stop-color="#cfc7cd"/><stop offset="1" stop-color="#bdb4ba"/></linearGradient><linearGradient id="g1" x1="0.4" y1="0" x2="0.6" y2="1"><stop offset="0" stop-color="#a8a4a8"/><stop offset="0.25" stop-color="#a49494"/><stop offset="0.42" stop-color="#b87c6c"/><stop offset="1" stop-color="#a86a5c"/></linearGradient><linearGradient id="gi1" x1="0.4" y1="0" x2="0.6" y2="1"><stop offset="0" stop-color="#939093"/><stop offset="0.25" stop-color="#8e8282"/><stop offset="0.42" stop-color="#9b6f63"/><stop offset="1" stop-color="#8d5f54"/></linearGradient><linearGradient id="g2" x1="1" y1="0" x2="0" y2="1"><stop offset="0" stop-color="#d0c8d0"/><stop offset="0.5" stop-color="#c0b0b8"/><stop offset="0.75" stop-color="#a87a80"/><stop offset="1" stop-color="#9c6a6c"/></linearGradient><linearGradient id="gi2" x1="1" y1="0" x2="0" y2="1"><stop offset="0" stop-color="#b6b0b6"/><stop offset="0.5" stop-color="#a79ba1"/><stop offset="0.75" stop-color="#906d72"/><stop offset="1" stop-color="#845f61"/></linearGradient><linearGradient id="g3" x1="0" y1="0" x2="0.4" y2="1"><stop offset="0" stop-color="#c86878"/><stop offset="0.35" stop-color="#d88494"/><stop offset="0.5" stop-color="#d8d0a8"/><stop offset="0.62" stop-color="#b86068"/><stop offset="1" stop-color="#a85060"/></linearGradient><linearGradient id="gi3" x1="0" y1="0" x2="0.4" y2="1"><stop offset="0" stop-color="#a8606c"/><stop offset="0.35" stop-color="#b77884"/><stop offset="0.5" stop-color="#bbb597"/><stop offset="0.62" stop-color="#9a585e"/><stop offset="1" stop-color="#8c4a56"/></linearGradient><linearGradient id="g4" x1="0" y1="0" x2="1" y2="1"><stop offset="0" stop-color="#a8909a"/><stop offset="0.4" stop-color="#c8b4bc"/><stop offset="0.6" stop-color="#d4c8c0"/><stop offset="1" stop-color="#b09098"/></linearGradient><linearGradient id="gi4" x1="0" y1="0" x2="1" y2="1"><stop offset="0" stop-color="#928087"/><stop offset="0.4" stop-color="#ae9fa5"/><stop offset="0.6" stop-color="#b9b0aa"/><stop offset="1" stop-color="#988086"/></linearGradient><linearGradient id="g5" x1="0" y1="0" x2="1" y2="1"><stop offset="0" stop-color="#d8c4cc"/><stop offset="0.6" stop-color="#c8aab4"/><stop offset="1" stop-color="#a88890"/></linearGradient><linearGradient id="gi5" x1="0" y1="0" x2="1" y2="1"><stop offset="0" stop-color="#bcadb3"/><stop offset="0.6" stop-color="#ad979e"/><stop offset="1" stop-color="#91797f"/></linearGradient><linearGradient id="g6" x1="0" y1="1" x2="1" y2="0"><stop offset="0" stop-color="#d8dcc8"/><stop offset="0.5" stop-color="#c8c8b8"/><stop offset="0.7" stop-color="#9a7068"/><stop offset="1" stop-color="#7a5048"/></linearGradient><linearGradient id="gi6" x1="0" y1="1" x2="1" y2="0"><stop offset="0" stop-color="#bdc0b1"/><stop offset="0.5" stop-color="#afafa3"/><stop offset="0.7" stop-color="#83645e"/><stop offset="1" stop-color="#674741"/></linearGradient><linearGradient id="g7" x1="0" y1="0" x2="0" y2="1"><stop offset="0" stop-color="#dcd0d8"/><stop offset="0.6" stop-color="#c8b8c0"/><stop offset="1" stop-color="#987078"/></linearGradient><linearGradient id="gi7" x1="0" y1="0" x2="0" y2="1"><stop offset="0" stop-color="#c0b7bd"/><stop offset="0.6" stop-color="#aea2a8"/><stop offset="1" stop-color="#82646a"/></linearGradient><linearGradient id="g8" x1="0" y1="0" x2="1" y2="1"><stop offset="0" stop-color="#e0d4dc"/><stop offset="0.5" stop-color="#e8e0e8"/><stop offset="1" stop-color="#c8bcc4"/></linearGradient><linearGradient id="gi8" x1="0" y1="0" x2="1" y2="1"><stop offset="0" stop-color="#c4bbc1"/><stop offset="0.5" stop-color="#cbc5cb"/><stop offset="1" stop-color="#afa6ac"/></linearGradient><linearGradient id="g9" x1="0" y1="0" x2="1" y2="1"><stop offset="0" stop-color="#7a3a44"/><stop offset="0.5" stop-color="#8a4a52"/><stop offset="0.75" stop-color="#c89098"/><stop offset="1" stop-color="#704048"/></linearGradient><linearGradient id="gi9" x1="0" y1="0" x2="1" y2="1"><stop offset="0" stop-color="#66363d"/><stop offset="0.5" stop-color="#74444a"/><stop offset="0.75" stop-color="#ab8187"/><stop offset="1" stop-color="#5e3a40"/></linearGradient><linearGradient id="g10" x1="1" y1="0" x2="0" y2="1"><stop offset="0" stop-color="#a8c090"/><stop offset="0.4" stop-color="#d0dcc0"/><stop offset="1" stop-color="#e8ece0"/></linearGradient><linearGradient id="gi10" x1="1" y1="0" x2="0" y2="1"><stop offset="0" stop-color="#93a581"/><stop offset="0.4" stop-color="#b6bfaa"/><stop offset="1" stop-color="#cbcec6"/></linearGradient><linearGradient id="g11" x1="0" y1="0" x2="1" y2="1"><stop offset="0" stop-color="#e8e8f0"/><stop offset="0.5" stop-color="#d8dce4"/><stop offset="1" stop-color="#c0c8b0"/></linearGradient><linearGradient id="gi11" x1="0" y1="0" x2="1" y2="1"><stop offset="0" stop-color="#ccccd2"/><stop offset="0.5" stop-color="#bec1c7"/><stop offset="1" stop-color="#a8ae9c"/></linearGradient><linearGradient id="g12" x1="0" y1="0" x2="1" y2="1"><stop offset="0" stop-color="#d4ccd4"/><stop offset="0.5" stop-color="#e6e0e6"/><stop offset="1" stop-color="#c4bcc0"/></linearGradient><linearGradient id="gi12" x1="0" y1="0" x2="1" y2="1"><stop offset="0" stop-color="#bab4ba"/><stop offset="0.5" stop-color="#cac5ca"/><stop offset="1" stop-color="#aba5a8"/></linearGradient><linearGradient id="g13" x1="0" y1="0" x2="1" y2="1"><stop offset="0" stop-color="#e4e8dc"/><stop offset="0.4" stop-color="#c8d4b0"/><stop offset="1" stop-color="#b8c8a0"/></linearGradient><linearGradient id="gi13" x1="0" y1="0" x2="1" y2="1"><stop offset="0" stop-color="#c8cbc2"/><stop offset="0.4" stop-color="#afb89d"/><stop offset="1" stop-color="#a1ad8f"/></linearGradient><linearGradient id="g14" x1="0" y1="0" x2="1" y2="0"><stop offset="0" stop-color="#d8e0c8"/><stop offset="0.45" stop-color="#b0c090"/><stop offset="0.55" stop-color="#f0f0e8"/><stop offset="1" stop-color="#c0cca8"/></linearGradient><linearGradient id="gi14" x1="0" y1="0" x2="1" y2="0"><stop offset="0" stop-color="#bdc3b1"/><stop offset="0.45" stop-color="#9aa682"/><stop offset="0.55" stop-color="#d2d2cc"/><stop offset="1" stop-color="#a8b196"/></linearGradient><linearGradient id="g15" x1="0" y1="0" x2="1" y2="1"><stop offset="0" stop-color="#d0dab8"/><stop offset="0.6" stop-color="#c0cca4"/><stop offset="1" stop-color="#a8b48c"/></linearGradient><linearGradient id="gi15" x1="0" y1="0" x2="1" y2="1"><stop offset="0" stop-color="#b6bda4"/><stop offset="0.6" stop-color="#a8b193"/><stop offset="1" stop-color="#939c7e"/></linearGradient><linearGradient id="g16" x1="0" y1="0" x2="1" y2="1"><stop offset="0" stop-color="#b8c49a"/><stop offset="0.6" stop-color="#a8b688"/><stop offset="1" stop-color="#98a878"/></linearGradient><linearGradient id="gi16" x1="0" y1="0" x2="1" y2="1"><stop offset="0" stop-color="#a1aa8a"/><stop offset="0.6" stop-color="#939d7b"/><stop offset="1" stop-color="#85916d"/></linearGradient><linearGradient id="g17" x1="0" y1="0" x2="1" y2="1"><stop offset="0" stop-color="#e8ece0"/><stop offset="0.5" stop-color="#c4d2ac"/><stop offset="1" stop-color="#b0c098"/></linearGradient><linearGradient id="gi17" x1="0" y1="0" x2="1" y2="1"><stop offset="0" stop-color="#cbcec6"/><stop offset="0.5" stop-color="#acb69a"/><stop offset="1" stop-color="#9aa688"/></linearGradient><linearGradient id="g18" x1="0" y1="0" x2="1" y2="0"><stop offset="0" stop-color="#c8d4b0"/><stop offset="0.5" stop-color="#eeeeea"/><stop offset="1" stop-color="#b0c098"/></linearGradient><linearGradient id="gi18" x1="0" y1="0" x2="1" y2="0"><stop offset="0" stop-color="#afb89d"/><stop offset="0.5" stop-color="#d1d1ce"/><stop offset="1" stop-color="#9aa688"/></linearGradient><linearGradient id="g19" x1="0" y1="0" x2="1" y2="1"><stop offset="0" stop-color="#d4dcc0"/><stop offset="0.6" stop-color="#c4ccac"/><stop offset="1" stop-color="#b0b898"/></linearGradient><linearGradient id="gi19" x1="0" y1="0" x2="1" y2="1"><stop offset="0" stop-color="#bac0ab"/><stop offset="0.6" stop-color="#abb199"/><stop offset="1" stop-color="#9aa088"/></linearGradient></defs><path d="M1649.0,114.0 C1652.0,113.7 1657.4,115.9 1659.0,118.0 C1660.6,120.1 1661.3,126.7 1661.0,130.0 C1660.7,133.3 1658.9,139.9 1657.0,142.5 C1655.1,145.1 1650.2,148.2 1647.0,149.6 C1643.8,151.0 1635.6,153.1 1632.7,152.7 C1629.8,152.3 1626.3,149.0 1625.6,146.6 C1624.9,144.2 1626.1,137.9 1627.6,134.4 C1629.1,130.9 1633.9,122.7 1636.8,120.0 C1639.7,117.3 1646.0,114.3 1649.0,114.0Z" fill="#3ccc3c" stroke="#1e78f0" stroke-width="0.8" stroke-dasharray="2 3"/><clipPath id="cp0"><path d="M1210.5,114.0 C1213.5,113.7 1218.9,115.9 1220.5,118.0 C1222.1,120.1 1222.8,126.7 1222.5,130.0 C1222.2,133.3 1220.4,139.9 1218.5,142.5 C1216.6,145.1 1211.7,148.2 1208.5,149.6 C1205.3,151.0 1197.1,153.1 1194.2,152.7 C1191.3,152.3 1187.8,149.0 1187.1,146.6 C1186.4,144.2 1187.6,137.9 1189.1,134.4 C1190.6,130.9 1195.4,122.7 1198.3,120.0 C1201.2,117.3 1207.5,114.3 1210.5,114.0Z"/></clipPath><path d="M1210.5,114.0 C1213.5,113.7 1218.9,115.9 1220.5,118.0 C1222.1,120.1 1222.8,126.7 1222.5,130.0 C1222.2,133.3 1220.4,139.9 1218.5,142.5 C1216.6,145.1 1211.7,148.2 1208.5,149.6 C1205.3,151.0 1197.1,153.1 1194.2,152.7 C1191.3,152.3 1187.8,149.0 1187.1,146.6 C1186.4,144.2 1187.6,137.9 1189.1,134.4 C1190.6,130.9 1195.4,122.7 1198.3,120.0 C1201.2,117.3 1207.5,114.3 1210.5,114.0Z" fill="url(#g0)"/><g clip-path="url(#cp0)"><ellipse cx="1213.0" cy="138.9" rx="7.0" ry="1.6" transform="rotate(-40 1213.0 138.9)" fill="#ffffff" opacity="0.22"/><ellipse cx="1205.8" cy="149.0" rx="6.1" ry="1.9" transform="rotate(60 1205.8 149.0)" fill="#ffffff" opacity="0.22"/><ellipse cx="1218.9" cy="139.3" rx="6.1" ry="2.2" transform="rotate(-50 1218.9 139.3)" fill="#f4eef2" opacity="0.22"/><ellipse cx="1210.0" cy="141.5" rx="7.3" ry="2.6" transform="rotate(60 1210.0 141.5)" fill="#ffffff" opacity="0.22"/><ellipse cx="1210.4" cy="123.6" rx="7.3" ry="2.7" transform="rotate(-40 1210.4 123.6)" fill="#a08088" opacity="0.18"/></g><path d="M1210.5,114.0 C1213.5,113.7 1218.9,115.9 1220.5,118.0 C1222.1,120.1 1222.8,126.7 1222.5,130.0 C1222.2,133.3 1220.4,139.9 1218.5,142.5 C1216.6,145.1 1211.7,148.2 1208.5,149.6 C1205.3,151.0 1197.1,153.1 1194.2,152.7 C1191.3,152.3 1187.8,149.0 1187.1,146.6 C1186.4,144.2 1187.6,137.9 1189.1,134.4 C1190.6,130.9 1195.4,122.7 1198.3,120.0 C1201.2,117.3 1207.5,114.3 1210.5,114.0Z" fill="none" stroke="#383838" stroke-width="1" stroke-opacity="0.75"/><path d="M1670.3,155.7 C1674.0,156.9 1673.3,162.0 1672.4,164.9 C1671.5,167.8 1666.1,174.0 1663.2,177.1 C1660.3,180.2 1654.3,186.3 1651.0,188.3 C1647.7,190.3 1642.6,191.9 1638.8,192.4 C1635.0,192.9 1625.8,193.4 1622.5,192.4 C1619.2,191.4 1614.0,189.3 1614.4,185.2 C1614.8,181.1 1621.5,165.8 1625.6,161.9 C1629.7,158.0 1638.9,156.5 1644.9,155.7 C1650.9,154.9 1666.6,154.5 1670.3,155.7Z" fill="#3ccc3c" stroke="#1e78f0" stroke-width="0.8" stroke-dasharray="2 3"/><clipPath id="cp1"><path d="M1231.8,155.7 C1235.5,156.9 1234.8,162.0 1233.9,164.9 C1233.0,167.8 1227.6,174.0 1224.7,177.1 C1221.8,180.2 1215.8,186.3 1212.5,188.3 C1209.2,190.3 1204.1,191.9 1200.3,192.4 C1196.5,192.9 1187.3,193.4 1184.0,192.4 C1180.7,191.4 1175.5,189.3 1175.9,185.2 C1176.3,181.1 1183.0,165.8 1187.1,161.9 C1191.2,158.0 1200.4,156.5 1206.4,155.7 C1212.4,154.9 1228.1,154.5 1231.8,155.7Z"/></clipPath><path d="M1231.8,155.7 C1235.5,156.9 1234.8,162.0 1233.9,164.9 C1233.0,167.8 1227.6,174.0 1224.7,177.1 C1221.8,180.2 1215.8,186.3 1212.5,188.3 C1209.2,190.3 1204.1,191.9 1200.3,192.4 C1196.5,192.9 1187.3,193.4 1184.0,192.4 C1180.7,191.4 1175.5,189.3 1175.9,185.2 C1176.3,181.1 1183.0,165.8 1187.1,161.9 C1191.2,158.0 1200.4,156.5 1206.4,155.7 C1212.4,154.9 1228.1,154.5 1231.8,155.7Z" fill="url(#g1)"/><g clip-path="url(#cp1)"><ellipse cx="1220.3" cy="160.5" rx="9.3" ry="1.6" transform="rotate(60 1220.3 160.5)" fill="#ffffff" opacity="0.22"/><ellipse cx="1219.8" cy="171.2" rx="7.8" ry="2.7" transform="rotate(-40 1219.8 171.2)" fill="#f4eef2" opacity="0.22"/><ellipse cx="1210.5" cy="160.3" rx="9.7" ry="2.6" transform="rotate(60 1210.5 160.3)" fill="#a08088" opacity="0.18"/><ellipse cx="1216.1" cy="178.8" rx="9.7" ry="2.9" transform="rotate(-40 1216.1 178.8)" fill="#a08088" opacity="0.18"/><ellipse cx="1179.9" cy="185.6" rx="9.5" ry="2.5" transform="rotate(-50 1179.9 185.6)" fill="#a08088" opacity="0.18"/></g><path d="M1231.8,155.7 C1235.5,156.9 1234.8,162.0 1233.9,164.9 C1233.0,167.8 1227.6,174.0 1224.7,177.1 C1221.8,180.2 1215.8,186.3 1212.5,188.3 C1209.2,190.3 1204.1,191.9 1200.3,192.4 C1196.5,192.9 1187.3,193.4 1184.0,192.4 C1180.7,191.4 1175.5,189.3 1175.9,185.2 C1176.3,181.1 1183.0,165.8 1187.1,161.9 C1191.2,158.0 1200.4,156.5 1206.4,155.7 C1212.4,154.9 1228.1,154.5 1231.8,155.7Z" fill="none" stroke="#383838" stroke-width="1" stroke-opacity="0.75"/><path d="M1651.0,194.4 C1653.6,194.7 1656.6,196.9 1658.1,199.5 C1659.6,202.1 1661.4,209.6 1662.2,213.7 C1663.0,217.8 1665.1,227.4 1664.2,230.0 C1663.3,232.6 1656.9,233.8 1655.1,233.0 C1653.3,232.2 1652.9,225.5 1651.0,223.9 C1649.1,222.3 1643.5,220.9 1640.8,220.8 C1638.1,220.7 1633.1,223.6 1630.7,222.9 C1628.3,222.2 1623.2,217.7 1622.5,215.7 C1621.8,213.7 1623.4,210.0 1625.6,207.6 C1627.8,205.2 1635.4,199.2 1638.8,197.4 C1642.2,195.6 1648.4,194.1 1651.0,194.4Z" fill="#3ccc3c" stroke="#1e78f0" stroke-width="0.8" stroke-dasharray="2 3"/><clipPath id="cp2"><path d="M1212.5,194.4 C1215.1,194.7 1218.1,196.9 1219.6,199.5 C1221.1,202.1 1222.9,209.6 1223.7,213.7 C1224.5,217.8 1226.6,227.4 1225.7,230.0 C1224.8,232.6 1218.4,233.8 1216.6,233.0 C1214.8,232.2 1214.4,225.5 1212.5,223.9 C1210.6,222.3 1205.0,220.9 1202.3,220.8 C1199.6,220.7 1194.6,223.6 1192.2,222.9 C1189.8,222.2 1184.7,217.7 1184.0,215.7 C1183.3,213.7 1184.9,210.0 1187.1,207.6 C1189.3,205.2 1196.9,199.2 1200.3,197.4 C1203.7,195.6 1209.9,194.1 1212.5,194.4Z"/></clipPath><path d="M1212.5,194.4 C1215.1,194.7 1218.1,196.9 1219.6,199.5 C1221.1,202.1 1222.9,209.6 1223.7,213.7 C1224.5,217.8 1226.6,227.4 1225.7,230.0 C1224.8,232.6 1218.4,233.8 1216.6,233.0 C1214.8,232.2 1214.4,225.5 1212.5,223.9 C1210.6,222.3 1205.0,220.9 1202.3,220.8 C1199.6,220.7 1194.6,223.6 1192.2,222.9 C1189.8,222.2 1184.7,217.7 1184.0,215.7 C1183.3,213.7 1184.9,210.0 1187.1,207.6 C1189.3,205.2 1196.9,199.2 1200.3,197.4 C1203.7,195.6 1209.9,194.1 1212.5,194.4Z" fill="url(#g2)"/><g clip-path="url(#cp2)"><ellipse cx="1205.6" cy="211.1" rx="5.7" ry="1.9" transform="rotate(-40 1205.6 211.1)" fill="#ffffff" opacity="0.22"/><ellipse cx="1209.4" cy="217.6" rx="10.0" ry="2.3" transform="rotate(-40 1209.4 217.6)" fill="#a08088" opacity="0.18"/><ellipse cx="1195.0" cy="223.1" rx="5.1" ry="2.3" transform="rotate(-40 1195.0 223.1)" fill="#f4eef2" opacity="0.22"/><ellipse cx="1214.0" cy="202.7" rx="8.8" ry="2.7" transform="rotate(50 1214.0 202.7)" fill="#f4eef2" opacity="0.22"/><ellipse cx="1189.9" cy="225.3" rx="9.7" ry="2.5" transform="rotate(60 1189.9 225.3)" fill="#a08088" opacity="0.18"/></g><path d="M1212.5,194.4 C1215.1,194.7 1218.1,196.9 1219.6,199.5 C1221.1,202.1 1222.9,209.6 1223.7,213.7 C1224.5,217.8 1226.6,227.4 1225.7,230.0 C1224.8,232.6 1218.4,233.8 1216.6,233.0 C1214.8,232.2 1214.4,225.5 1212.5,223.9 C1210.6,222.3 1205.0,220.9 1202.3,220.8 C1199.6,220.7 1194.6,223.6 1192.2,222.9 C1189.8,222.2 1184.7,217.7 1184.0,215.7 C1183.3,213.7 1184.9,210.0 1187.1,207.6 C1189.3,205.2 1196.9,199.2 1200.3,197.4 C1203.7,195.6 1209.9,194.1 1212.5,194.4Z" fill="none" stroke="#383838" stroke-width="1" stroke-opacity="0.75"/><path d="M1651.0,234.0 C1653.0,235.8 1650.9,247.9 1652.0,250.3 C1653.1,252.7 1657.9,250.3 1659.1,252.3 C1660.3,254.3 1662.3,263.1 1661.2,265.5 C1660.1,267.9 1654.0,269.6 1651.0,270.6 C1648.0,271.6 1641.2,273.0 1638.8,272.7 C1636.4,272.4 1634.3,270.5 1632.7,268.6 C1631.1,266.7 1627.3,261.7 1626.6,258.4 C1625.9,255.1 1626.2,247.0 1627.6,244.2 C1629.0,241.4 1633.7,238.5 1636.8,237.1 C1639.9,235.7 1649.0,232.2 1651.0,234.0Z" fill="#3ccc3c" stroke="#1e78f0" stroke-width="0.8" stroke-dasharray="2 3"/><line x1="1649" y1="234" x2="1649" y2="271" stroke="#1e78f0" stroke-width="1"/><clipPath id="cp3"><path d="M1212.5,234.0 C1214.5,235.8 1212.4,247.9 1213.5,250.3 C1214.6,252.7 1219.4,250.3 1220.6,252.3 C1221.8,254.3 1223.8,263.1 1222.7,265.5 C1221.6,267.9 1215.5,269.6 1212.5,270.6 C1209.5,271.6 1202.7,273.0 1200.3,272.7 C1197.9,272.4 1195.8,270.5 1194.2,268.6 C1192.6,266.7 1188.8,261.7 1188.1,258.4 C1187.4,255.1 1187.7,247.0 1189.1,244.2 C1190.5,241.4 1195.2,238.5 1198.3,237.1 C1201.4,235.7 1210.5,232.2 1212.5,234.0Z"/></clipPath><path d="M1212.5,234.0 C1214.5,235.8 1212.4,247.9 1213.5,250.3 C1214.6,252.7 1219.4,250.3 1220.6,252.3 C1221.8,254.3 1223.8,263.1 1222.7,265.5 C1221.6,267.9 1215.5,269.6 1212.5,270.6 C1209.5,271.6 1202.7,273.0 1200.3,272.7 C1197.9,272.4 1195.8,270.5 1194.2,268.6 C1192.6,266.7 1188.8,261.7 1188.1,258.4 C1187.4,255.1 1187.7,247.0 1189.1,244.2 C1190.5,241.4 1195.2,238.5 1198.3,237.1 C1201.4,235.7 1210.5,232.2 1212.5,234.0Z" fill="url(#g3)"/><g clip-path="url(#cp3)"><ellipse cx="1205.3" cy="248.8" rx="7.3" ry="2.3" transform="rotate(60 1205.3 248.8)" fill="#a08088" opacity="0.18"/><ellipse cx="1191.8" cy="248.0" rx="7.5" ry="2.3" transform="rotate(50 1191.8 248.0)" fill="#f4eef2" opacity="0.22"/><ellipse cx="1216.1" cy="256.0" rx="8.6" ry="2.8" transform="rotate(-50 1216.1 256.0)" fill="#a08088" opacity="0.18"/><ellipse cx="1209.5" cy="259.3" rx="5.3" ry="1.8" transform="rotate(-50 1209.5 259.3)" fill="#a08088" opacity="0.18"/><ellipse cx="1195.1" cy="248.2" rx="6.2" ry="2.8" transform="rotate(60 1195.1 248.2)" fill="#a08088" opacity="0.18"/></g><path d="M1212.5,234.0 C1214.5,235.8 1212.4,247.9 1213.5,250.3 C1214.6,252.7 1219.4,250.3 1220.6,252.3 C1221.8,254.3 1223.8,263.1 1222.7,265.5 C1221.6,267.9 1215.5,269.6 1212.5,270.6 C1209.5,271.6 1202.7,273.0 1200.3,272.7 C1197.9,272.4 1195.8,270.5 1194.2,268.6 C1192.6,266.7 1188.8,261.7 1188.1,258.4 C1187.4,255.1 1187.7,247.0 1189.1,244.2 C1190.5,241.4 1195.2,238.5 1198.3,237.1 C1201.4,235.7 1210.5,232.2 1212.5,234.0Z" fill="none" stroke="#383838" stroke-width="1" stroke-opacity="0.75"/><path d="M1660.2,274.7 C1662.8,277.0 1660.9,288.9 1660.2,293.0 C1659.5,297.1 1657.4,302.6 1655.1,305.2 C1652.8,307.8 1646.2,311.9 1642.9,312.3 C1639.6,312.7 1633.0,310.6 1630.7,308.3 C1628.4,306.0 1625.9,298.1 1625.6,295.0 C1625.3,291.9 1626.6,287.5 1628.6,284.9 C1630.6,282.3 1636.6,277.1 1640.8,275.7 C1645.0,274.3 1657.6,272.4 1660.2,274.7Z" fill="#3ccc3c" stroke="#1e78f0" stroke-width="0.8" stroke-dasharray="2 3"/><clipPath id="cp4"><path d="M1221.7,274.7 C1224.3,277.0 1222.4,288.9 1221.7,293.0 C1221.0,297.1 1218.9,302.6 1216.6,305.2 C1214.3,307.8 1207.7,311.9 1204.4,312.3 C1201.1,312.7 1194.5,310.6 1192.2,308.3 C1189.9,306.0 1187.4,298.1 1187.1,295.0 C1186.8,291.9 1188.1,287.5 1190.1,284.9 C1192.1,282.3 1198.1,277.1 1202.3,275.7 C1206.5,274.3 1219.1,272.4 1221.7,274.7Z"/></clipPath><path d="M1221.7,274.7 C1224.3,277.0 1222.4,288.9 1221.7,293.0 C1221.0,297.1 1218.9,302.6 1216.6,305.2 C1214.3,307.8 1207.7,311.9 1204.4,312.3 C1201.1,312.7 1194.5,310.6 1192.2,308.3 C1189.9,306.0 1187.4,298.1 1187.1,295.0 C1186.8,291.9 1188.1,287.5 1190.1,284.9 C1192.1,282.3 1198.1,277.1 1202.3,275.7 C1206.5,274.3 1219.1,272.4 1221.7,274.7Z" fill="url(#g4)"/><g clip-path="url(#cp4)"><ellipse cx="1202.1" cy="308.5" rx="7.7" ry="2.5" transform="rotate(-40 1202.1 308.5)" fill="#a08088" opacity="0.18"/><ellipse cx="1212.2" cy="306.5" rx="6.7" ry="1.6" transform="rotate(-40 1212.2 306.5)" fill="#ffffff" opacity="0.22"/><ellipse cx="1214.3" cy="289.4" rx="6.2" ry="1.5" transform="rotate(-50 1214.3 289.4)" fill="#a08088" opacity="0.18"/><ellipse cx="1193.8" cy="280.6" rx="6.6" ry="2.0" transform="rotate(-50 1193.8 280.6)" fill="#a08088" opacity="0.18"/><ellipse cx="1202.3" cy="292.8" rx="5.3" ry="3.0" transform="rotate(-50 1202.3 292.8)" fill="#a08088" opacity="0.18"/></g><path d="M1221.7,274.7 C1224.3,277.0 1222.4,288.9 1221.7,293.0 C1221.0,297.1 1218.9,302.6 1216.6,305.2 C1214.3,307.8 1207.7,311.9 1204.4,312.3 C1201.1,312.7 1194.5,310.6 1192.2,308.3 C1189.9,306.0 1187.4,298.1 1187.1,295.0 C1186.8,291.9 1188.1,287.5 1190.1,284.9 C1192.1,282.3 1198.1,277.1 1202.3,275.7 C1206.5,274.3 1219.1,272.4 1221.7,274.7Z" fill="none" stroke="#383838" stroke-width="1" stroke-opacity="0.75"/><path d="M1640.8,314.1 C1643.1,314.0 1649.1,315.2 1651.0,317.1 C1652.9,319.0 1654.8,324.9 1655.1,328.3 C1655.4,331.7 1654.1,339.4 1653.0,342.5 C1651.9,345.6 1648.4,350.5 1646.9,351.7 C1645.4,352.9 1643.4,353.1 1641.9,351.7 C1640.4,350.3 1637.2,344.5 1635.8,341.5 C1634.4,338.5 1632.0,332.4 1631.7,329.3 C1631.4,326.2 1632.5,320.1 1633.7,318.1 C1634.9,316.1 1638.5,314.2 1640.8,314.1Z" fill="#3ccc3c" stroke="#1e78f0" stroke-width="0.8" stroke-dasharray="2 3"/><clipPath id="cp5"><path d="M1202.3,314.1 C1204.6,314.0 1210.6,315.2 1212.5,317.1 C1214.4,319.0 1216.3,324.9 1216.6,328.3 C1216.9,331.7 1215.6,339.4 1214.5,342.5 C1213.4,345.6 1209.9,350.5 1208.4,351.7 C1206.9,352.9 1204.9,353.1 1203.4,351.7 C1201.9,350.3 1198.7,344.5 1197.3,341.5 C1195.9,338.5 1193.5,332.4 1193.2,329.3 C1192.9,326.2 1194.0,320.1 1195.2,318.1 C1196.4,316.1 1200.0,314.2 1202.3,314.1Z"/></clipPath><path d="M1202.3,314.1 C1204.6,314.0 1210.6,315.2 1212.5,317.1 C1214.4,319.0 1216.3,324.9 1216.6,328.3 C1216.9,331.7 1215.6,339.4 1214.5,342.5 C1213.4,345.6 1209.9,350.5 1208.4,351.7 C1206.9,352.9 1204.9,353.1 1203.4,351.7 C1201.9,350.3 1198.7,344.5 1197.3,341.5 C1195.9,338.5 1193.5,332.4 1193.2,329.3 C1192.9,326.2 1194.0,320.1 1195.2,318.1 C1196.4,316.1 1200.0,314.2 1202.3,314.1Z" fill="url(#g5)"/><g clip-path="url(#cp5)"><ellipse cx="1204.6" cy="345.6" rx="7.1" ry="2.9" transform="rotate(50 1204.6 345.6)" fill="#a08088" opacity="0.18"/><ellipse cx="1202.4" cy="338.0" rx="5.6" ry="2.8" transform="rotate(50 1202.4 338.0)" fill="#f4eef2" opacity="0.22"/><ellipse cx="1210.2" cy="342.7" rx="8.4" ry="2.7" transform="rotate(50 1210.2 342.7)" fill="#a08088" opacity="0.18"/><ellipse cx="1209.6" cy="327.8" rx="6.3" ry="1.6" transform="rotate(-50 1209.6 327.8)" fill="#ffffff" opacity="0.22"/><ellipse cx="1211.5" cy="323.6" rx="9.5" ry="3.0" transform="rotate(-50 1211.5 323.6)" fill="#a08088" opacity="0.18"/></g><path d="M1202.3,314.1 C1204.6,314.0 1210.6,315.2 1212.5,317.1 C1214.4,319.0 1216.3,324.9 1216.6,328.3 C1216.9,331.7 1215.6,339.4 1214.5,342.5 C1213.4,345.6 1209.9,350.5 1208.4,351.7 C1206.9,352.9 1204.9,353.1 1203.4,351.7 C1201.9,350.3 1198.7,344.5 1197.3,341.5 C1195.9,338.5 1193.5,332.4 1193.2,329.3 C1192.9,326.2 1194.0,320.1 1195.2,318.1 C1196.4,316.1 1200.0,314.2 1202.3,314.1Z" fill="none" stroke="#383838" stroke-width="1" stroke-opacity="0.75"/><path d="M1666.0,353.7 C1666.7,354.1 1667.4,357.3 1668.0,358.8 C1668.6,360.3 1669.4,362.9 1670.3,364.9 C1671.2,366.9 1675.3,371.5 1674.4,374.1 C1673.5,376.7 1666.9,382.0 1663.2,384.2 C1659.5,386.4 1651.2,389.4 1646.9,390.3 C1642.6,391.2 1634.5,392.0 1630.7,391.3 C1626.9,390.6 1620.9,387.6 1618.5,385.2 C1616.1,382.8 1612.1,375.6 1612.4,373.0 C1612.7,370.4 1618.3,367.4 1620.5,365.9 C1622.7,364.4 1626.9,362.3 1628.6,361.9 C1630.3,361.5 1631.6,362.7 1633.0,363.0 C1634.4,363.3 1637.6,364.0 1638.8,363.9 C1640.0,363.8 1640.6,362.1 1642.0,362.0 C1643.4,361.9 1646.7,363.5 1649.0,362.9 C1651.3,362.3 1657.2,358.8 1659.1,357.8 C1661.0,356.8 1662.1,356.2 1663.0,355.7 C1663.9,355.2 1665.3,353.3 1666.0,353.7Z" fill="#3ccc3c" stroke="#1e78f0" stroke-width="0.8" stroke-dasharray="2 3"/><line x1="1627.6" y1="363" x2="1627.6" y2="391" stroke="#1e78f0" stroke-width="1"/><clipPath id="cp6"><path d="M1227.5,353.7 C1228.2,354.1 1228.9,357.3 1229.5,358.8 C1230.1,360.3 1230.9,362.9 1231.8,364.9 C1232.7,366.9 1236.8,371.5 1235.9,374.1 C1235.0,376.7 1228.4,382.0 1224.7,384.2 C1221.0,386.4 1212.7,389.4 1208.4,390.3 C1204.1,391.2 1196.0,392.0 1192.2,391.3 C1188.4,390.6 1182.4,387.6 1180.0,385.2 C1177.6,382.8 1173.6,375.6 1173.9,373.0 C1174.2,370.4 1179.8,367.4 1182.0,365.9 C1184.2,364.4 1188.4,362.3 1190.1,361.9 C1191.8,361.5 1193.1,362.7 1194.5,363.0 C1195.9,363.3 1199.1,364.0 1200.3,363.9 C1201.5,363.8 1202.1,362.1 1203.5,362.0 C1204.9,361.9 1208.2,363.5 1210.5,362.9 C1212.8,362.3 1218.7,358.8 1220.6,357.8 C1222.5,356.8 1223.6,356.2 1224.5,355.7 C1225.4,355.2 1226.8,353.3 1227.5,353.7Z"/></clipPath><path d="M1227.5,353.7 C1228.2,354.1 1228.9,357.3 1229.5,358.8 C1230.1,360.3 1230.9,362.9 1231.8,364.9 C1232.7,366.9 1236.8,371.5 1235.9,374.1 C1235.0,376.7 1228.4,382.0 1224.7,384.2 C1221.0,386.4 1212.7,389.4 1208.4,390.3 C1204.1,391.2 1196.0,392.0 1192.2,391.3 C1188.4,390.6 1182.4,387.6 1180.0,385.2 C1177.6,382.8 1173.6,375.6 1173.9,373.0 C1174.2,370.4 1179.8,367.4 1182.0,365.9 C1184.2,364.4 1188.4,362.3 1190.1,361.9 C1191.8,361.5 1193.1,362.7 1194.5,363.0 C1195.9,363.3 1199.1,364.0 1200.3,363.9 C1201.5,363.8 1202.1,362.1 1203.5,362.0 C1204.9,361.9 1208.2,363.5 1210.5,362.9 C1212.8,362.3 1218.7,358.8 1220.6,357.8 C1222.5,356.8 1223.6,356.2 1224.5,355.7 C1225.4,355.2 1226.8,353.3 1227.5,353.7Z" fill="url(#g6)"/><g clip-path="url(#cp6)"><ellipse cx="1196.3" cy="363.9" rx="6.0" ry="2.4" transform="rotate(-50 1196.3 363.9)" fill="#ffffff" opacity="0.22"/><ellipse cx="1219.8" cy="385.1" rx="8.2" ry="2.4" transform="rotate(60 1219.8 385.1)" fill="#f4eef2" opacity="0.22"/><ellipse cx="1225.8" cy="366.4" rx="5.2" ry="1.9" transform="rotate(-50 1225.8 366.4)" fill="#f4eef2" opacity="0.22"/><ellipse cx="1179.1" cy="381.5" rx="5.5" ry="2.1" transform="rotate(-50 1179.1 381.5)" fill="#ffffff" opacity="0.22"/><ellipse cx="1221.6" cy="368.6" rx="6.6" ry="1.7" transform="rotate(60 1221.6 368.6)" fill="#f4eef2" opacity="0.22"/></g><path d="M1227.5,353.7 C1228.2,354.1 1228.9,357.3 1229.5,358.8 C1230.1,360.3 1230.9,362.9 1231.8,364.9 C1232.7,366.9 1236.8,371.5 1235.9,374.1 C1235.0,376.7 1228.4,382.0 1224.7,384.2 C1221.0,386.4 1212.7,389.4 1208.4,390.3 C1204.1,391.2 1196.0,392.0 1192.2,391.3 C1188.4,390.6 1182.4,387.6 1180.0,385.2 C1177.6,382.8 1173.6,375.6 1173.9,373.0 C1174.2,370.4 1179.8,367.4 1182.0,365.9 C1184.2,364.4 1188.4,362.3 1190.1,361.9 C1191.8,361.5 1193.1,362.7 1194.5,363.0 C1195.9,363.3 1199.1,364.0 1200.3,363.9 C1201.5,363.8 1202.1,362.1 1203.5,362.0 C1204.9,361.9 1208.2,363.5 1210.5,362.9 C1212.8,362.3 1218.7,358.8 1220.6,357.8 C1222.5,356.8 1223.6,356.2 1224.5,355.7 C1225.4,355.2 1226.8,353.3 1227.5,353.7Z" fill="none" stroke="#383838" stroke-width="1" stroke-opacity="0.75"/><path d="M1644.9,394.4 C1647.8,394.4 1653.1,395.6 1655.1,397.4 C1657.1,399.2 1659.5,404.1 1660.2,407.6 C1660.9,411.1 1660.7,420.6 1660.2,423.9 C1659.7,427.2 1657.6,431.2 1656.1,432.0 C1654.6,432.8 1651.3,431.1 1649.0,430.0 C1646.7,428.9 1641.8,425.1 1638.8,423.9 C1635.8,422.7 1628.1,423.2 1626.6,420.8 C1625.1,418.4 1626.7,408.7 1627.6,405.6 C1628.5,402.5 1631.4,398.9 1633.7,397.4 C1636.0,395.9 1642.0,394.4 1644.9,394.4Z" fill="#3ccc3c" stroke="#1e78f0" stroke-width="0.8" stroke-dasharray="2 3"/><clipPath id="cp7"><path d="M1206.4,394.4 C1209.3,394.4 1214.6,395.6 1216.6,397.4 C1218.6,399.2 1221.0,404.1 1221.7,407.6 C1222.4,411.1 1222.2,420.6 1221.7,423.9 C1221.2,427.2 1219.1,431.2 1217.6,432.0 C1216.1,432.8 1212.8,431.1 1210.5,430.0 C1208.2,428.9 1203.3,425.1 1200.3,423.9 C1197.3,422.7 1189.6,423.2 1188.1,420.8 C1186.6,418.4 1188.2,408.7 1189.1,405.6 C1190.0,402.5 1192.9,398.9 1195.2,397.4 C1197.5,395.9 1203.5,394.4 1206.4,394.4Z"/></clipPath><path d="M1206.4,394.4 C1209.3,394.4 1214.6,395.6 1216.6,397.4 C1218.6,399.2 1221.0,404.1 1221.7,407.6 C1222.4,411.1 1222.2,420.6 1221.7,423.9 C1221.2,427.2 1219.1,431.2 1217.6,432.0 C1216.1,432.8 1212.8,431.1 1210.5,430.0 C1208.2,428.9 1203.3,425.1 1200.3,423.9 C1197.3,422.7 1189.6,423.2 1188.1,420.8 C1186.6,418.4 1188.2,408.7 1189.1,405.6 C1190.0,402.5 1192.9,398.9 1195.2,397.4 C1197.5,395.9 1203.5,394.4 1206.4,394.4Z" fill="url(#g7)"/><g clip-path="url(#cp7)"><ellipse cx="1214.7" cy="422.7" rx="5.9" ry="2.0" transform="rotate(-40 1214.7 422.7)" fill="#a08088" opacity="0.18"/><ellipse cx="1197.3" cy="428.2" rx="6.0" ry="1.6" transform="rotate(50 1197.3 428.2)" fill="#a08088" opacity="0.18"/><ellipse cx="1211.3" cy="417.1" rx="7.2" ry="1.8" transform="rotate(-50 1211.3 417.1)" fill="#ffffff" opacity="0.22"/><ellipse cx="1194.4" cy="426.4" rx="5.3" ry="1.9" transform="rotate(60 1194.4 426.4)" fill="#a08088" opacity="0.18"/><ellipse cx="1199.2" cy="404.6" rx="6.7" ry="2.0" transform="rotate(-40 1199.2 404.6)" fill="#ffffff" opacity="0.22"/></g><path d="M1206.4,394.4 C1209.3,394.4 1214.6,395.6 1216.6,397.4 C1218.6,399.2 1221.0,404.1 1221.7,407.6 C1222.4,411.1 1222.2,420.6 1221.7,423.9 C1221.2,427.2 1219.1,431.2 1217.6,432.0 C1216.1,432.8 1212.8,431.1 1210.5,430.0 C1208.2,428.9 1203.3,425.1 1200.3,423.9 C1197.3,422.7 1189.6,423.2 1188.1,420.8 C1186.6,418.4 1188.2,408.7 1189.1,405.6 C1190.0,402.5 1192.9,398.9 1195.2,397.4 C1197.5,395.9 1203.5,394.4 1206.4,394.4Z" fill="none" stroke="#383838" stroke-width="1" stroke-opacity="0.75"/><path d="M1630.7,434.0 C1634.2,434.4 1644.9,437.9 1649.0,440.1 C1653.1,442.3 1658.9,447.6 1661.2,450.3 C1663.5,453.0 1665.5,457.7 1666.2,460.5 C1666.9,463.3 1668.0,470.1 1666.2,471.6 C1664.4,473.1 1656.9,472.5 1653.0,471.6 C1649.1,470.7 1640.9,466.4 1636.8,464.5 C1632.7,462.6 1624.7,459.6 1622.5,457.4 C1620.3,455.2 1620.5,451.0 1620.5,448.3 C1620.5,445.6 1621.1,439.0 1622.5,437.1 C1623.9,435.2 1627.2,433.6 1630.7,434.0Z" fill="#3ccc3c" stroke="#1e78f0" stroke-width="0.8" stroke-dasharray="2 3"/><clipPath id="cp8"><path d="M1192.2,434.0 C1195.7,434.4 1206.4,437.9 1210.5,440.1 C1214.6,442.3 1220.4,447.6 1222.7,450.3 C1225.0,453.0 1227.0,457.7 1227.7,460.5 C1228.4,463.3 1229.5,470.1 1227.7,471.6 C1225.9,473.1 1218.4,472.5 1214.5,471.6 C1210.6,470.7 1202.4,466.4 1198.3,464.5 C1194.2,462.6 1186.2,459.6 1184.0,457.4 C1181.8,455.2 1182.0,451.0 1182.0,448.3 C1182.0,445.6 1182.6,439.0 1184.0,437.1 C1185.4,435.2 1188.7,433.6 1192.2,434.0Z"/></clipPath><path d="M1192.2,434.0 C1195.7,434.4 1206.4,437.9 1210.5,440.1 C1214.6,442.3 1220.4,447.6 1222.7,450.3 C1225.0,453.0 1227.0,457.7 1227.7,460.5 C1228.4,463.3 1229.5,470.1 1227.7,471.6 C1225.9,473.1 1218.4,472.5 1214.5,471.6 C1210.6,470.7 1202.4,466.4 1198.3,464.5 C1194.2,462.6 1186.2,459.6 1184.0,457.4 C1181.8,455.2 1182.0,451.0 1182.0,448.3 C1182.0,445.6 1182.6,439.0 1184.0,437.1 C1185.4,435.2 1188.7,433.6 1192.2,434.0Z" fill="url(#g8)"/><g clip-path="url(#cp8)"><ellipse cx="1205.6" cy="467.3" rx="5.4" ry="2.7" transform="rotate(-50 1205.6 467.3)" fill="#f4eef2" opacity="0.22"/><ellipse cx="1187.0" cy="457.9" rx="9.4" ry="2.4" transform="rotate(-50 1187.0 457.9)" fill="#ffffff" opacity="0.22"/><ellipse cx="1208.5" cy="458.1" rx="9.0" ry="2.0" transform="rotate(-40 1208.5 458.1)" fill="#a08088" opacity="0.18"/><ellipse cx="1204.3" cy="454.0" rx="5.7" ry="1.7" transform="rotate(-40 1204.3 454.0)" fill="#ffffff" opacity="0.22"/><ellipse cx="1199.9" cy="440.4" rx="5.7" ry="1.8" transform="rotate(-40 1199.9 440.4)" fill="#ffffff" opacity="0.22"/></g><path d="M1192.2,434.0 C1195.7,434.4 1206.4,437.9 1210.5,440.1 C1214.6,442.3 1220.4,447.6 1222.7,450.3 C1225.0,453.0 1227.0,457.7 1227.7,460.5 C1228.4,463.3 1229.5,470.1 1227.7,471.6 C1225.9,473.1 1218.4,472.5 1214.5,471.6 C1210.6,470.7 1202.4,466.4 1198.3,464.5 C1194.2,462.6 1186.2,459.6 1184.0,457.4 C1181.8,455.2 1182.0,451.0 1182.0,448.3 C1182.0,445.6 1182.6,439.0 1184.0,437.1 C1185.4,435.2 1188.7,433.6 1192.2,434.0Z" fill="none" stroke="#383838" stroke-width="1" stroke-opacity="0.75"/><path d="M1636.8,473.7 C1639.2,472.5 1641.6,473.7 1644.9,475.7 C1648.2,477.7 1659.2,486.0 1661.2,488.9 C1663.2,491.8 1661.8,494.5 1660.2,497.1 C1658.6,499.7 1652.1,506.3 1649.0,508.3 C1645.9,510.3 1639.7,512.4 1636.8,512.3 C1633.9,512.2 1629.1,509.5 1627.6,507.2 C1626.1,504.9 1625.7,498.0 1625.6,495.0 C1625.5,492.0 1625.1,487.7 1626.6,484.9 C1628.1,482.1 1634.4,474.9 1636.8,473.7Z" fill="#3ccc3c" stroke="#1e78f0" stroke-width="0.8" stroke-dasharray="2 3"/><clipPath id="cp9"><path d="M1198.3,473.7 C1200.7,472.5 1203.1,473.7 1206.4,475.7 C1209.7,477.7 1220.7,486.0 1222.7,488.9 C1224.7,491.8 1223.3,494.5 1221.7,497.1 C1220.1,499.7 1213.6,506.3 1210.5,508.3 C1207.4,510.3 1201.2,512.4 1198.3,512.3 C1195.4,512.2 1190.6,509.5 1189.1,507.2 C1187.6,504.9 1187.2,498.0 1187.1,495.0 C1187.0,492.0 1186.6,487.7 1188.1,484.9 C1189.6,482.1 1195.9,474.9 1198.3,473.7Z"/></clipPath><path d="M1198.3,473.7 C1200.7,472.5 1203.1,473.7 1206.4,475.7 C1209.7,477.7 1220.7,486.0 1222.7,488.9 C1224.7,491.8 1223.3,494.5 1221.7,497.1 C1220.1,499.7 1213.6,506.3 1210.5,508.3 C1207.4,510.3 1201.2,512.4 1198.3,512.3 C1195.4,512.2 1190.6,509.5 1189.1,507.2 C1187.6,504.9 1187.2,498.0 1187.1,495.0 C1187.0,492.0 1186.6,487.7 1188.1,484.9 C1189.6,482.1 1195.9,474.9 1198.3,473.7Z" fill="url(#g9)"/><g clip-path="url(#cp9)"><ellipse cx="1195.4" cy="492.6" rx="8.7" ry="2.2" transform="rotate(-40 1195.4 492.6)" fill="#ffffff" opacity="0.22"/><ellipse cx="1205.0" cy="503.3" rx="6.1" ry="1.6" transform="rotate(-40 1205.0 503.3)" fill="#ffffff" opacity="0.22"/><ellipse cx="1195.9" cy="479.2" rx="5.8" ry="2.6" transform="rotate(50 1195.9 479.2)" fill="#f4eef2" opacity="0.22"/><ellipse cx="1203.8" cy="493.3" rx="9.3" ry="2.0" transform="rotate(-40 1203.8 493.3)" fill="#ffffff" opacity="0.22"/><ellipse cx="1194.3" cy="497.6" rx="7.1" ry="2.7" transform="rotate(60 1194.3 497.6)" fill="#ffffff" opacity="0.22"/></g><path d="M1198.3,473.7 C1200.7,472.5 1203.1,473.7 1206.4,475.7 C1209.7,477.7 1220.7,486.0 1222.7,488.9 C1224.7,491.8 1223.3,494.5 1221.7,497.1 C1220.1,499.7 1213.6,506.3 1210.5,508.3 C1207.4,510.3 1201.2,512.4 1198.3,512.3 C1195.4,512.2 1190.6,509.5 1189.1,507.2 C1187.6,504.9 1187.2,498.0 1187.1,495.0 C1187.0,492.0 1186.6,487.7 1188.1,484.9 C1189.6,482.1 1195.9,474.9 1198.3,473.7Z" fill="none" stroke="#383838" stroke-width="1" stroke-opacity="0.75"/><path d="M1648.0,514.1 C1649.9,514.5 1653.9,519.2 1655.1,522.2 C1656.3,525.2 1657.9,533.3 1657.1,536.4 C1656.3,539.5 1651.2,543.6 1649.0,545.6 C1646.8,547.6 1642.8,551.2 1640.8,551.7 C1638.8,552.2 1635.0,551.2 1633.7,549.7 C1632.4,548.2 1630.8,543.2 1630.7,540.5 C1630.6,537.8 1631.4,532.1 1632.7,529.3 C1634.0,526.5 1638.8,521.2 1640.8,519.2 C1642.8,517.2 1646.1,513.7 1648.0,514.1Z" fill="#3ccc3c" stroke="#1e78f0" stroke-width="0.8" stroke-dasharray="2 3"/><path d="M1648.0,514.1 C1650.4,514.6 1653.6,518.5 1655.1,522.2 C1656.6,525.9 1658.1,532.5 1657.1,536.4 C1656.1,540.3 1652.3,544.5 1649.0,545.6 C1645.7,546.7 1639.3,545.8 1637.0,543.0 C1634.7,540.2 1634.4,533.0 1635.0,529.0 C1635.6,525.0 1638.6,521.7 1640.8,519.2 C1643.0,516.7 1645.6,513.6 1648.0,514.1Z" fill="#1a7cf0" opacity="0.55"/><clipPath id="cp10"><path d="M1209.5,514.1 C1211.4,514.5 1215.4,519.2 1216.6,522.2 C1217.8,525.2 1219.4,533.3 1218.6,536.4 C1217.8,539.5 1212.7,543.6 1210.5,545.6 C1208.3,547.6 1204.3,551.2 1202.3,551.7 C1200.3,552.2 1196.5,551.2 1195.2,549.7 C1193.9,548.2 1192.3,543.2 1192.2,540.5 C1192.1,537.8 1192.9,532.1 1194.2,529.3 C1195.5,526.5 1200.3,521.2 1202.3,519.2 C1204.3,517.2 1207.6,513.7 1209.5,514.1Z"/></clipPath><path d="M1209.5,514.1 C1211.4,514.5 1215.4,519.2 1216.6,522.2 C1217.8,525.2 1219.4,533.3 1218.6,536.4 C1217.8,539.5 1212.7,543.6 1210.5,545.6 C1208.3,547.6 1204.3,551.2 1202.3,551.7 C1200.3,552.2 1196.5,551.2 1195.2,549.7 C1193.9,548.2 1192.3,543.2 1192.2,540.5 C1192.1,537.8 1192.9,532.1 1194.2,529.3 C1195.5,526.5 1200.3,521.2 1202.3,519.2 C1204.3,517.2 1207.6,513.7 1209.5,514.1Z" fill="url(#g10)"/><g clip-path="url(#cp10)"><ellipse cx="1208.9" cy="544.2" rx="7.7" ry="2.1" transform="rotate(60 1208.9 544.2)" fill="#ffffff" opacity="0.22"/><ellipse cx="1198.6" cy="530.9" rx="9.4" ry="1.7" transform="rotate(50 1198.6 530.9)" fill="#a08088" opacity="0.18"/><ellipse cx="1215.5" cy="535.3" rx="7.0" ry="2.4" transform="rotate(50 1215.5 535.3)" fill="#ffffff" opacity="0.22"/><ellipse cx="1205.8" cy="517.6" rx="7.8" ry="1.9" transform="rotate(-40 1205.8 517.6)" fill="#a08088" opacity="0.18"/><ellipse cx="1198.1" cy="548.5" rx="10.0" ry="2.7" transform="rotate(-50 1198.1 548.5)" fill="#ffffff" opacity="0.22"/></g><path d="M1209.5,514.1 C1211.4,514.5 1215.4,519.2 1216.6,522.2 C1217.8,525.2 1219.4,533.3 1218.6,536.4 C1217.8,539.5 1212.7,543.6 1210.5,545.6 C1208.3,547.6 1204.3,551.2 1202.3,551.7 C1200.3,552.2 1196.5,551.2 1195.2,549.7 C1193.9,548.2 1192.3,543.2 1192.2,540.5 C1192.1,537.8 1192.9,532.1 1194.2,529.3 C1195.5,526.5 1200.3,521.2 1202.3,519.2 C1204.3,517.2 1207.6,513.7 1209.5,514.1Z" fill="none" stroke="#383838" stroke-width="1" stroke-opacity="0.75"/><path d="M1632.7,555.7 C1636.8,554.9 1653.3,553.9 1657.1,554.7 C1660.9,555.5 1660.8,559.2 1661.2,561.9 C1661.6,564.6 1661.6,571.8 1660.2,575.1 C1658.8,578.4 1654.3,584.1 1651.0,586.3 C1647.7,588.5 1638.9,591.3 1635.8,591.3 C1632.7,591.3 1629.0,589.0 1627.6,586.3 C1626.2,583.6 1625.7,574.4 1625.6,571.0 C1625.5,567.6 1625.7,562.8 1626.6,560.8 C1627.5,558.8 1628.6,556.5 1632.7,555.7Z" fill="#3ccc3c" stroke="#1e78f0" stroke-width="0.8" stroke-dasharray="2 3"/><clipPath id="cp11"><path d="M1194.2,555.7 C1198.3,554.9 1214.8,553.9 1218.6,554.7 C1222.4,555.5 1222.3,559.2 1222.7,561.9 C1223.1,564.6 1223.1,571.8 1221.7,575.1 C1220.3,578.4 1215.8,584.1 1212.5,586.3 C1209.2,588.5 1200.4,591.3 1197.3,591.3 C1194.2,591.3 1190.5,589.0 1189.1,586.3 C1187.7,583.6 1187.2,574.4 1187.1,571.0 C1187.0,567.6 1187.2,562.8 1188.1,560.8 C1189.0,558.8 1190.1,556.5 1194.2,555.7Z"/></clipPath><path d="M1194.2,555.7 C1198.3,554.9 1214.8,553.9 1218.6,554.7 C1222.4,555.5 1222.3,559.2 1222.7,561.9 C1223.1,564.6 1223.1,571.8 1221.7,575.1 C1220.3,578.4 1215.8,584.1 1212.5,586.3 C1209.2,588.5 1200.4,591.3 1197.3,591.3 C1194.2,591.3 1190.5,589.0 1189.1,586.3 C1187.7,583.6 1187.2,574.4 1187.1,571.0 C1187.0,567.6 1187.2,562.8 1188.1,560.8 C1189.0,558.8 1190.1,556.5 1194.2,555.7Z" fill="url(#g11)"/><g clip-path="url(#cp11)"><ellipse cx="1201.0" cy="558.6" rx="8.3" ry="2.1" transform="rotate(60 1201.0 558.6)" fill="#ffffff" opacity="0.22"/><ellipse cx="1218.3" cy="565.6" rx="7.3" ry="1.9" transform="rotate(60 1218.3 565.6)" fill="#ffffff" opacity="0.22"/><ellipse cx="1217.4" cy="588.2" rx="6.1" ry="2.1" transform="rotate(50 1217.4 588.2)" fill="#f4eef2" opacity="0.22"/><ellipse cx="1204.2" cy="558.3" rx="7.7" ry="2.5" transform="rotate(-40 1204.2 558.3)" fill="#ffffff" opacity="0.22"/><ellipse cx="1217.5" cy="580.3" rx="9.7" ry="1.9" transform="rotate(60 1217.5 580.3)" fill="#f4eef2" opacity="0.22"/></g><path d="M1194.2,555.7 C1198.3,554.9 1214.8,553.9 1218.6,554.7 C1222.4,555.5 1222.3,559.2 1222.7,561.9 C1223.1,564.6 1223.1,571.8 1221.7,575.1 C1220.3,578.4 1215.8,584.1 1212.5,586.3 C1209.2,588.5 1200.4,591.3 1197.3,591.3 C1194.2,591.3 1190.5,589.0 1189.1,586.3 C1187.7,583.6 1187.2,574.4 1187.1,571.0 C1187.0,567.6 1187.2,562.8 1188.1,560.8 C1189.0,558.8 1190.1,556.5 1194.2,555.7Z" fill="none" stroke="#383838" stroke-width="1" stroke-opacity="0.75"/><path d="M1622.5,594.4 C1624.4,593.9 1629.2,594.3 1632.7,595.4 C1636.2,596.5 1645.2,600.9 1649.0,602.5 C1652.8,604.1 1658.8,605.8 1661.2,607.6 C1663.6,609.4 1666.8,613.0 1667.3,615.7 C1667.8,618.4 1667.1,625.6 1665.2,627.9 C1663.3,630.2 1656.5,632.7 1653.0,633.0 C1649.5,633.3 1642.6,631.6 1638.8,630.0 C1635.0,628.4 1627.3,623.2 1624.6,620.8 C1621.9,618.4 1619.3,614.5 1618.5,611.7 C1617.7,608.9 1618.0,601.8 1618.5,599.5 C1619.0,597.2 1620.6,594.9 1622.5,594.4Z" fill="#3ccc3c" stroke="#1e78f0" stroke-width="0.8" stroke-dasharray="2 3"/><clipPath id="cp12"><path d="M1184.0,594.4 C1185.9,593.9 1190.7,594.3 1194.2,595.4 C1197.7,596.5 1206.7,600.9 1210.5,602.5 C1214.3,604.1 1220.3,605.8 1222.7,607.6 C1225.1,609.4 1228.3,613.0 1228.8,615.7 C1229.3,618.4 1228.6,625.6 1226.7,627.9 C1224.8,630.2 1218.0,632.7 1214.5,633.0 C1211.0,633.3 1204.1,631.6 1200.3,630.0 C1196.5,628.4 1188.8,623.2 1186.1,620.8 C1183.4,618.4 1180.8,614.5 1180.0,611.7 C1179.2,608.9 1179.5,601.8 1180.0,599.5 C1180.5,597.2 1182.1,594.9 1184.0,594.4Z"/></clipPath><path d="M1184.0,594.4 C1185.9,593.9 1190.7,594.3 1194.2,595.4 C1197.7,596.5 1206.7,600.9 1210.5,602.5 C1214.3,604.1 1220.3,605.8 1222.7,607.6 C1225.1,609.4 1228.3,613.0 1228.8,615.7 C1229.3,618.4 1228.6,625.6 1226.7,627.9 C1224.8,630.2 1218.0,632.7 1214.5,633.0 C1211.0,633.3 1204.1,631.6 1200.3,630.0 C1196.5,628.4 1188.8,623.2 1186.1,620.8 C1183.4,618.4 1180.8,614.5 1180.0,611.7 C1179.2,608.9 1179.5,601.8 1180.0,599.5 C1180.5,597.2 1182.1,594.9 1184.0,594.4Z" fill="url(#g12)"/><g clip-path="url(#cp12)"><ellipse cx="1197.5" cy="602.1" rx="8.0" ry="2.0" transform="rotate(60 1197.5 602.1)" fill="#ffffff" opacity="0.22"/><ellipse cx="1205.8" cy="603.9" rx="7.2" ry="1.5" transform="rotate(60 1205.8 603.9)" fill="#ffffff" opacity="0.22"/><ellipse cx="1222.4" cy="613.0" rx="9.8" ry="2.2" transform="rotate(50 1222.4 613.0)" fill="#ffffff" opacity="0.22"/><ellipse cx="1218.3" cy="604.2" rx="9.4" ry="2.3" transform="rotate(-40 1218.3 604.2)" fill="#f4eef2" opacity="0.22"/><ellipse cx="1203.6" cy="624.3" rx="6.1" ry="2.6" transform="rotate(-50 1203.6 624.3)" fill="#f4eef2" opacity="0.22"/></g><path d="M1184.0,594.4 C1185.9,593.9 1190.7,594.3 1194.2,595.4 C1197.7,596.5 1206.7,600.9 1210.5,602.5 C1214.3,604.1 1220.3,605.8 1222.7,607.6 C1225.1,609.4 1228.3,613.0 1228.8,615.7 C1229.3,618.4 1228.6,625.6 1226.7,627.9 C1224.8,630.2 1218.0,632.7 1214.5,633.0 C1211.0,633.3 1204.1,631.6 1200.3,630.0 C1196.5,628.4 1188.8,623.2 1186.1,620.8 C1183.4,618.4 1180.8,614.5 1180.0,611.7 C1179.2,608.9 1179.5,601.8 1180.0,599.5 C1180.5,597.2 1182.1,594.9 1184.0,594.4Z" fill="none" stroke="#383838" stroke-width="1" stroke-opacity="0.75"/><path d="M1636.8,634.0 C1639.7,634.0 1639.5,636.9 1641.9,638.1 C1644.3,639.3 1651.4,641.3 1655.1,643.2 C1658.8,645.1 1667.7,650.3 1669.3,652.3 C1670.9,654.3 1669.5,656.8 1667.3,658.4 C1665.1,660.0 1655.2,662.6 1653.0,664.5 C1650.8,666.4 1652.6,671.9 1651.0,672.7 C1649.4,673.5 1644.1,672.0 1640.8,670.6 C1637.5,669.2 1629.2,664.9 1626.6,662.5 C1624.0,660.1 1622.9,654.7 1621.5,652.3 C1620.1,649.9 1616.5,646.1 1616.4,644.2 C1616.3,642.3 1617.8,639.5 1620.5,638.1 C1623.2,636.7 1633.9,634.0 1636.8,634.0Z" fill="#0a7cff" stroke="#e02020" stroke-width="0.8" stroke-dasharray="2 3"/><clipPath id="cp13"><path d="M1198.3,634.0 C1201.2,634.0 1201.0,636.9 1203.4,638.1 C1205.8,639.3 1212.9,641.3 1216.6,643.2 C1220.3,645.1 1229.2,650.3 1230.8,652.3 C1232.4,654.3 1231.0,656.8 1228.8,658.4 C1226.6,660.0 1216.7,662.6 1214.5,664.5 C1212.3,666.4 1214.1,671.9 1212.5,672.7 C1210.9,673.5 1205.6,672.0 1202.3,670.6 C1199.0,669.2 1190.7,664.9 1188.1,662.5 C1185.5,660.1 1184.4,654.7 1183.0,652.3 C1181.6,649.9 1178.0,646.1 1177.9,644.2 C1177.8,642.3 1179.3,639.5 1182.0,638.1 C1184.7,636.7 1195.4,634.0 1198.3,634.0Z"/></clipPath><path d="M1198.3,634.0 C1201.2,634.0 1201.0,636.9 1203.4,638.1 C1205.8,639.3 1212.9,641.3 1216.6,643.2 C1220.3,645.1 1229.2,650.3 1230.8,652.3 C1232.4,654.3 1231.0,656.8 1228.8,658.4 C1226.6,660.0 1216.7,662.6 1214.5,664.5 C1212.3,666.4 1214.1,671.9 1212.5,672.7 C1210.9,673.5 1205.6,672.0 1202.3,670.6 C1199.0,669.2 1190.7,664.9 1188.1,662.5 C1185.5,660.1 1184.4,654.7 1183.0,652.3 C1181.6,649.9 1178.0,646.1 1177.9,644.2 C1177.8,642.3 1179.3,639.5 1182.0,638.1 C1184.7,636.7 1195.4,634.0 1198.3,634.0Z" fill="url(#g13)"/><g clip-path="url(#cp13)"><rect x="1224.2" y="662.6" width="1.2" height="1.2" fill="#404830" opacity="0.7"/><rect x="1213.6" y="661.2" width="1.2" height="1.2" fill="#404830" opacity="0.7"/><rect x="1220.7" y="660.2" width="1.2" height="1.2" fill="#404830" opacity="0.7"/><rect x="1207.7" y="636.9" width="1.2" height="1.2" fill="#404830" opacity="0.7"/></g><path d="M1198.3,634.0 C1201.2,634.0 1201.0,636.9 1203.4,638.1 C1205.8,639.3 1212.9,641.3 1216.6,643.2 C1220.3,645.1 1229.2,650.3 1230.8,652.3 C1232.4,654.3 1231.0,656.8 1228.8,658.4 C1226.6,660.0 1216.7,662.6 1214.5,664.5 C1212.3,666.4 1214.1,671.9 1212.5,672.7 C1210.9,673.5 1205.6,672.0 1202.3,670.6 C1199.0,669.2 1190.7,664.9 1188.1,662.5 C1185.5,660.1 1184.4,654.7 1183.0,652.3 C1181.6,649.9 1178.0,646.1 1177.9,644.2 C1177.8,642.3 1179.3,639.5 1182.0,638.1 C1184.7,636.7 1195.4,634.0 1198.3,634.0Z" fill="none" stroke="#383838" stroke-width="1" stroke-opacity="0.75"/><path d="M1642.9,674.7 C1645.9,674.7 1652.8,676.9 1655.1,678.8 C1657.4,680.7 1659.8,685.9 1660.2,688.9 C1660.6,691.9 1659.6,698.1 1658.1,701.1 C1656.6,704.1 1651.6,709.8 1649.0,711.3 C1646.4,712.8 1641.4,713.4 1638.8,712.3 C1636.2,711.2 1631.3,706.3 1629.7,703.2 C1628.1,700.1 1626.2,692.2 1626.6,688.9 C1627.0,685.6 1630.5,680.7 1632.7,678.8 C1634.9,676.9 1639.9,674.7 1642.9,674.7Z" fill="#0a7cff" stroke="#e02020" stroke-width="0.8" stroke-dasharray="2 3"/><clipPath id="cp14"><path d="M1204.4,674.7 C1207.4,674.7 1214.3,676.9 1216.6,678.8 C1218.9,680.7 1221.3,685.9 1221.7,688.9 C1222.1,691.9 1221.1,698.1 1219.6,701.1 C1218.1,704.1 1213.1,709.8 1210.5,711.3 C1207.9,712.8 1202.9,713.4 1200.3,712.3 C1197.7,711.2 1192.8,706.3 1191.2,703.2 C1189.6,700.1 1187.7,692.2 1188.1,688.9 C1188.5,685.6 1192.0,680.7 1194.2,678.8 C1196.4,676.9 1201.4,674.7 1204.4,674.7Z"/></clipPath><path d="M1204.4,674.7 C1207.4,674.7 1214.3,676.9 1216.6,678.8 C1218.9,680.7 1221.3,685.9 1221.7,688.9 C1222.1,691.9 1221.1,698.1 1219.6,701.1 C1218.1,704.1 1213.1,709.8 1210.5,711.3 C1207.9,712.8 1202.9,713.4 1200.3,712.3 C1197.7,711.2 1192.8,706.3 1191.2,703.2 C1189.6,700.1 1187.7,692.2 1188.1,688.9 C1188.5,685.6 1192.0,680.7 1194.2,678.8 C1196.4,676.9 1201.4,674.7 1204.4,674.7Z" fill="url(#g14)"/><g clip-path="url(#cp14)"><rect x="1205.4" y="684.7" width="1.2" height="1.2" fill="#404830" opacity="0.7"/><rect x="1191.1" y="691.1" width="1.2" height="1.2" fill="#404830" opacity="0.7"/><rect x="1218.9" y="697.6" width="1.2" height="1.2" fill="#404830" opacity="0.7"/><rect x="1203.9" y="693.9" width="1.2" height="1.2" fill="#404830" opacity="0.7"/><ellipse cx="1206.9" cy="693.5" rx="8.4" ry="11.3" fill="#f8f8f4" opacity="0.7"/></g><path d="M1204.4,674.7 C1207.4,674.7 1214.3,676.9 1216.6,678.8 C1218.9,680.7 1221.3,685.9 1221.7,688.9 C1222.1,691.9 1221.1,698.1 1219.6,701.1 C1218.1,704.1 1213.1,709.8 1210.5,711.3 C1207.9,712.8 1202.9,713.4 1200.3,712.3 C1197.7,711.2 1192.8,706.3 1191.2,703.2 C1189.6,700.1 1187.7,692.2 1188.1,688.9 C1188.5,685.6 1192.0,680.7 1194.2,678.8 C1196.4,676.9 1201.4,674.7 1204.4,674.7Z" fill="none" stroke="#383838" stroke-width="1" stroke-opacity="0.75"/><path d="M1651.0,714.1 C1652.6,714.4 1653.7,717.2 1655.1,720.2 C1656.5,723.2 1660.4,732.3 1661.2,736.4 C1662.0,740.5 1662.0,748.5 1661.2,750.7 C1660.4,752.9 1657.8,753.2 1655.1,752.7 C1652.4,752.2 1644.3,748.4 1640.8,746.6 C1637.3,744.8 1630.8,741.4 1628.6,739.5 C1626.4,737.6 1624.3,734.2 1624.6,732.4 C1624.9,730.6 1628.3,728.2 1630.7,726.3 C1633.1,724.4 1640.2,719.7 1642.9,718.1 C1645.6,716.5 1649.4,713.8 1651.0,714.1Z" fill="#0a7cff" stroke="#e02020" stroke-width="0.8" stroke-dasharray="2 3"/><clipPath id="cp15"><path d="M1212.5,714.1 C1214.1,714.4 1215.2,717.2 1216.6,720.2 C1218.0,723.2 1221.9,732.3 1222.7,736.4 C1223.5,740.5 1223.5,748.5 1222.7,750.7 C1221.9,752.9 1219.3,753.2 1216.6,752.7 C1213.9,752.2 1205.8,748.4 1202.3,746.6 C1198.8,744.8 1192.3,741.4 1190.1,739.5 C1187.9,737.6 1185.8,734.2 1186.1,732.4 C1186.4,730.6 1189.8,728.2 1192.2,726.3 C1194.6,724.4 1201.7,719.7 1204.4,718.1 C1207.1,716.5 1210.9,713.8 1212.5,714.1Z"/></clipPath><path d="M1212.5,714.1 C1214.1,714.4 1215.2,717.2 1216.6,720.2 C1218.0,723.2 1221.9,732.3 1222.7,736.4 C1223.5,740.5 1223.5,748.5 1222.7,750.7 C1221.9,752.9 1219.3,753.2 1216.6,752.7 C1213.9,752.2 1205.8,748.4 1202.3,746.6 C1198.8,744.8 1192.3,741.4 1190.1,739.5 C1187.9,737.6 1185.8,734.2 1186.1,732.4 C1186.4,730.6 1189.8,728.2 1192.2,726.3 C1194.6,724.4 1201.7,719.7 1204.4,718.1 C1207.1,716.5 1210.9,713.8 1212.5,714.1Z" fill="url(#g15)"/><g clip-path="url(#cp15)"><rect x="1191.5" y="726.5" width="1.2" height="1.2" fill="#404830" opacity="0.7"/><rect x="1218.6" y="732.9" width="1.2" height="1.2" fill="#404830" opacity="0.7"/><rect x="1211.5" y="742.4" width="1.2" height="1.2" fill="#404830" opacity="0.7"/><rect x="1201.2" y="731.2" width="1.2" height="1.2" fill="#404830" opacity="0.7"/><rect x="1209.7" y="726.7" width="1.2" height="1.2" fill="#404830" opacity="0.7"/><rect x="1212.0" y="737.7" width="1.2" height="1.2" fill="#404830" opacity="0.7"/><rect x="1188.4" y="747.5" width="1.2" height="1.2" fill="#404830" opacity="0.7"/><rect x="1191.7" y="730.4" width="1.2" height="1.2" fill="#404830" opacity="0.7"/><rect x="1204.3" y="730.3" width="1.2" height="1.2" fill="#404830" opacity="0.7"/><rect x="1198.9" y="738.4" width="1.2" height="1.2" fill="#404830" opacity="0.7"/><rect x="1195.6" y="724.1" width="1.2" height="1.2" fill="#404830" opacity="0.7"/><rect x="1189.6" y="737.2" width="1.2" height="1.2" fill="#404830" opacity="0.7"/><rect x="1218.5" y="736.5" width="1.2" height="1.2" fill="#404830" opacity="0.7"/><rect x="1190.3" y="730.8" width="1.2" height="1.2" fill="#404830" opacity="0.7"/></g><path d="M1212.5,714.1 C1214.1,714.4 1215.2,717.2 1216.6,720.2 C1218.0,723.2 1221.9,732.3 1222.7,736.4 C1223.5,740.5 1223.5,748.5 1222.7,750.7 C1221.9,752.9 1219.3,753.2 1216.6,752.7 C1213.9,752.2 1205.8,748.4 1202.3,746.6 C1198.8,744.8 1192.3,741.4 1190.1,739.5 C1187.9,737.6 1185.8,734.2 1186.1,732.4 C1186.4,730.6 1189.8,728.2 1192.2,726.3 C1194.6,724.4 1201.7,719.7 1204.4,718.1 C1207.1,716.5 1210.9,713.8 1212.5,714.1Z" fill="none" stroke="#383838" stroke-width="1" stroke-opacity="0.75"/><path d="M1640.8,754.7 C1644.6,754.3 1654.0,756.2 1657.1,757.8 C1660.2,759.4 1663.8,764.1 1664.2,766.9 C1664.6,769.7 1662.2,776.2 1660.2,779.1 C1658.2,782.0 1652.7,786.7 1649.0,788.3 C1645.3,789.9 1636.2,791.7 1632.7,791.3 C1629.2,790.9 1623.9,787.9 1622.5,785.2 C1621.1,782.5 1621.7,774.3 1622.5,771.0 C1623.3,767.7 1626.2,763.0 1628.6,760.8 C1631.0,758.6 1637.0,755.1 1640.8,754.7Z" fill="#0a7cff" stroke="#e02020" stroke-width="0.8" stroke-dasharray="2 3"/><clipPath id="cp16"><path d="M1202.3,754.7 C1206.1,754.3 1215.5,756.2 1218.6,757.8 C1221.7,759.4 1225.3,764.1 1225.7,766.9 C1226.1,769.7 1223.7,776.2 1221.7,779.1 C1219.7,782.0 1214.2,786.7 1210.5,788.3 C1206.8,789.9 1197.7,791.7 1194.2,791.3 C1190.7,790.9 1185.4,787.9 1184.0,785.2 C1182.6,782.5 1183.2,774.3 1184.0,771.0 C1184.8,767.7 1187.7,763.0 1190.1,760.8 C1192.5,758.6 1198.5,755.1 1202.3,754.7Z"/></clipPath><path d="M1202.3,754.7 C1206.1,754.3 1215.5,756.2 1218.6,757.8 C1221.7,759.4 1225.3,764.1 1225.7,766.9 C1226.1,769.7 1223.7,776.2 1221.7,779.1 C1219.7,782.0 1214.2,786.7 1210.5,788.3 C1206.8,789.9 1197.7,791.7 1194.2,791.3 C1190.7,790.9 1185.4,787.9 1184.0,785.2 C1182.6,782.5 1183.2,774.3 1184.0,771.0 C1184.8,767.7 1187.7,763.0 1190.1,760.8 C1192.5,758.6 1198.5,755.1 1202.3,754.7Z" fill="url(#g16)"/><g clip-path="url(#cp16)"><rect x="1199.8" y="769.4" width="1.2" height="1.2" fill="#404830" opacity="0.7"/><rect x="1199.1" y="775.0" width="1.2" height="1.2" fill="#404830" opacity="0.7"/><rect x="1210.2" y="778.0" width="1.2" height="1.2" fill="#404830" opacity="0.7"/><rect x="1199.1" y="772.8" width="1.2" height="1.2" fill="#404830" opacity="0.7"/><rect x="1203.7" y="786.3" width="1.2" height="1.2" fill="#404830" opacity="0.7"/><rect x="1204.0" y="773.3" width="1.2" height="1.2" fill="#404830" opacity="0.7"/><rect x="1209.0" y="775.5" width="1.2" height="1.2" fill="#404830" opacity="0.7"/><rect x="1192.8" y="775.8" width="1.2" height="1.2" fill="#404830" opacity="0.7"/><rect x="1198.3" y="768.5" width="1.2" height="1.2" fill="#404830" opacity="0.7"/><rect x="1219.2" y="767.5" width="1.2" height="1.2" fill="#404830" opacity="0.7"/><rect x="1197.0" y="776.8" width="1.2" height="1.2" fill="#404830" opacity="0.7"/><rect x="1216.6" y="780.9" width="1.2" height="1.2" fill="#404830" opacity="0.7"/><rect x="1210.3" y="762.7" width="1.2" height="1.2" fill="#404830" opacity="0.7"/><rect x="1194.8" y="775.6" width="1.2" height="1.2" fill="#404830" opacity="0.7"/></g><path d="M1202.3,754.7 C1206.1,754.3 1215.5,756.2 1218.6,757.8 C1221.7,759.4 1225.3,764.1 1225.7,766.9 C1226.1,769.7 1223.7,776.2 1221.7,779.1 C1219.7,782.0 1214.2,786.7 1210.5,788.3 C1206.8,789.9 1197.7,791.7 1194.2,791.3 C1190.7,790.9 1185.4,787.9 1184.0,785.2 C1182.6,782.5 1183.2,774.3 1184.0,771.0 C1184.8,767.7 1187.7,763.0 1190.1,760.8 C1192.5,758.6 1198.5,755.1 1202.3,754.7Z" fill="none" stroke="#383838" stroke-width="1" stroke-opacity="0.75"/><path d="M1642.9,794.4 C1645.6,794.8 1652.3,796.9 1655.1,799.5 C1657.9,802.1 1663.7,810.4 1664.2,813.7 C1664.7,817.0 1661.1,821.6 1659.1,823.9 C1657.1,826.2 1652.3,830.1 1649.0,831.0 C1645.7,831.9 1637.6,831.9 1634.7,831.0 C1631.8,830.1 1628.8,826.5 1627.6,823.9 C1626.4,821.3 1626.3,814.1 1625.6,811.7 C1624.9,809.3 1622.4,807.1 1622.5,805.6 C1622.6,804.1 1625.0,801.7 1626.6,800.5 C1628.2,799.3 1632.5,797.2 1634.7,796.4 C1636.9,795.6 1640.2,794.0 1642.9,794.4Z" fill="#0a7cff" stroke="#e02020" stroke-width="0.8" stroke-dasharray="2 3"/><clipPath id="cp17"><path d="M1204.4,794.4 C1207.1,794.8 1213.8,796.9 1216.6,799.5 C1219.4,802.1 1225.2,810.4 1225.7,813.7 C1226.2,817.0 1222.6,821.6 1220.6,823.9 C1218.6,826.2 1213.8,830.1 1210.5,831.0 C1207.2,831.9 1199.1,831.9 1196.2,831.0 C1193.3,830.1 1190.3,826.5 1189.1,823.9 C1187.9,821.3 1187.8,814.1 1187.1,811.7 C1186.4,809.3 1183.9,807.1 1184.0,805.6 C1184.1,804.1 1186.5,801.7 1188.1,800.5 C1189.7,799.3 1194.0,797.2 1196.2,796.4 C1198.4,795.6 1201.7,794.0 1204.4,794.4Z"/></clipPath><path d="M1204.4,794.4 C1207.1,794.8 1213.8,796.9 1216.6,799.5 C1219.4,802.1 1225.2,810.4 1225.7,813.7 C1226.2,817.0 1222.6,821.6 1220.6,823.9 C1218.6,826.2 1213.8,830.1 1210.5,831.0 C1207.2,831.9 1199.1,831.9 1196.2,831.0 C1193.3,830.1 1190.3,826.5 1189.1,823.9 C1187.9,821.3 1187.8,814.1 1187.1,811.7 C1186.4,809.3 1183.9,807.1 1184.0,805.6 C1184.1,804.1 1186.5,801.7 1188.1,800.5 C1189.7,799.3 1194.0,797.2 1196.2,796.4 C1198.4,795.6 1201.7,794.0 1204.4,794.4Z" fill="url(#g17)"/><g clip-path="url(#cp17)"><rect x="1204.1" y="817.1" width="1.2" height="1.2" fill="#404830" opacity="0.7"/><rect x="1193.2" y="799.5" width="1.2" height="1.2" fill="#404830" opacity="0.7"/><rect x="1197.8" y="805.9" width="1.2" height="1.2" fill="#404830" opacity="0.7"/><rect x="1214.8" y="828.2" width="1.2" height="1.2" fill="#404830" opacity="0.7"/><ellipse cx="1206.8" cy="812.7" rx="10.4" ry="11.0" fill="#f8f8f4" opacity="0.7"/></g><path d="M1204.4,794.4 C1207.1,794.8 1213.8,796.9 1216.6,799.5 C1219.4,802.1 1225.2,810.4 1225.7,813.7 C1226.2,817.0 1222.6,821.6 1220.6,823.9 C1218.6,826.2 1213.8,830.1 1210.5,831.0 C1207.2,831.9 1199.1,831.9 1196.2,831.0 C1193.3,830.1 1190.3,826.5 1189.1,823.9 C1187.9,821.3 1187.8,814.1 1187.1,811.7 C1186.4,809.3 1183.9,807.1 1184.0,805.6 C1184.1,804.1 1186.5,801.7 1188.1,800.5 C1189.7,799.3 1194.0,797.2 1196.2,796.4 C1198.4,795.6 1201.7,794.0 1204.4,794.4Z" fill="none" stroke="#383838" stroke-width="1" stroke-opacity="0.75"/><path d="M1643.9,834.0 C1645.5,834.3 1649.5,837.7 1651.0,840.1 C1652.5,842.5 1654.8,849.0 1655.1,852.3 C1655.4,855.6 1653.9,861.8 1653.0,864.5 C1652.1,867.2 1650.0,872.0 1648.0,872.7 C1646.0,873.4 1639.8,871.5 1637.8,869.6 C1635.8,867.7 1633.2,861.5 1632.7,858.4 C1632.2,855.3 1632.9,848.9 1633.7,846.2 C1634.5,843.5 1637.4,839.7 1638.8,838.1 C1640.2,836.5 1642.3,833.7 1643.9,834.0Z" fill="#0a7cff" stroke="#e02020" stroke-width="0.8" stroke-dasharray="2 3"/><clipPath id="cp18"><path d="M1205.4,834.0 C1207.0,834.3 1211.0,837.7 1212.5,840.1 C1214.0,842.5 1216.3,849.0 1216.6,852.3 C1216.9,855.6 1215.4,861.8 1214.5,864.5 C1213.6,867.2 1211.5,872.0 1209.5,872.7 C1207.5,873.4 1201.3,871.5 1199.3,869.6 C1197.3,867.7 1194.7,861.5 1194.2,858.4 C1193.7,855.3 1194.4,848.9 1195.2,846.2 C1196.0,843.5 1198.9,839.7 1200.3,838.1 C1201.7,836.5 1203.8,833.7 1205.4,834.0Z"/></clipPath><path d="M1205.4,834.0 C1207.0,834.3 1211.0,837.7 1212.5,840.1 C1214.0,842.5 1216.3,849.0 1216.6,852.3 C1216.9,855.6 1215.4,861.8 1214.5,864.5 C1213.6,867.2 1211.5,872.0 1209.5,872.7 C1207.5,873.4 1201.3,871.5 1199.3,869.6 C1197.3,867.7 1194.7,861.5 1194.2,858.4 C1193.7,855.3 1194.4,848.9 1195.2,846.2 C1196.0,843.5 1198.9,839.7 1200.3,838.1 C1201.7,836.5 1203.8,833.7 1205.4,834.0Z" fill="url(#g18)"/><g clip-path="url(#cp18)"><rect x="1203.4" y="862.8" width="1.2" height="1.2" fill="#404830" opacity="0.7"/><rect x="1209.2" y="859.5" width="1.2" height="1.2" fill="#404830" opacity="0.7"/><rect x="1210.7" y="847.0" width="1.2" height="1.2" fill="#404830" opacity="0.7"/><rect x="1209.8" y="842.5" width="1.2" height="1.2" fill="#404830" opacity="0.7"/><ellipse cx="1207.4" cy="853.4" rx="5.6" ry="11.6" fill="#f8f8f4" opacity="0.7"/></g><path d="M1205.4,834.0 C1207.0,834.3 1211.0,837.7 1212.5,840.1 C1214.0,842.5 1216.3,849.0 1216.6,852.3 C1216.9,855.6 1215.4,861.8 1214.5,864.5 C1213.6,867.2 1211.5,872.0 1209.5,872.7 C1207.5,873.4 1201.3,871.5 1199.3,869.6 C1197.3,867.7 1194.7,861.5 1194.2,858.4 C1193.7,855.3 1194.4,848.9 1195.2,846.2 C1196.0,843.5 1198.9,839.7 1200.3,838.1 C1201.7,836.5 1203.8,833.7 1205.4,834.0Z" fill="none" stroke="#383838" stroke-width="1" stroke-opacity="0.75"/><path d="M1640.8,874.7 C1643.2,875.0 1668.4,885.2 1671.0,886.0 C1673.6,886.8 1684.7,888.4 1685.6,889.0 C1686.5,889.6 1686.2,896.1 1685.6,897.0 C1685.0,897.9 1677.5,904.3 1676.0,905.0 C1674.5,905.7 1662.7,908.6 1660.0,909.0 C1657.3,909.4 1632.8,912.3 1630.0,912.5 C1627.2,912.7 1613.7,913.1 1612.0,913.0 C1610.3,912.9 1601.6,911.7 1601.0,911.0 C1600.4,910.3 1600.4,901.9 1601.0,901.0 C1601.6,900.1 1610.8,895.7 1612.0,895.0 C1613.2,894.3 1621.0,889.8 1622.0,889.0 C1623.0,888.2 1628.9,881.8 1630.0,881.0 C1631.1,880.2 1638.4,874.4 1640.8,874.7Z" fill="#0a7cff" stroke="#e02020" stroke-width="0.8" stroke-dasharray="2 3"/><clipPath id="cp19"><path d="M1202.3,874.7 C1204.7,875.0 1229.9,885.2 1232.5,886.0 C1235.1,886.8 1246.2,888.4 1247.1,889.0 C1248.0,889.6 1247.7,896.1 1247.1,897.0 C1246.5,897.9 1239.0,904.3 1237.5,905.0 C1236.0,905.7 1224.2,908.6 1221.5,909.0 C1218.8,909.4 1194.3,912.3 1191.5,912.5 C1188.7,912.7 1175.2,913.1 1173.5,913.0 C1171.8,912.9 1163.1,911.7 1162.5,911.0 C1161.9,910.3 1161.9,901.9 1162.5,901.0 C1163.1,900.1 1172.3,895.7 1173.5,895.0 C1174.7,894.3 1182.5,889.8 1183.5,889.0 C1184.5,888.2 1190.4,881.8 1191.5,881.0 C1192.6,880.2 1199.9,874.4 1202.3,874.7Z"/></clipPath><path d="M1202.3,874.7 C1204.7,875.0 1229.9,885.2 1232.5,886.0 C1235.1,886.8 1246.2,888.4 1247.1,889.0 C1248.0,889.6 1247.7,896.1 1247.1,897.0 C1246.5,897.9 1239.0,904.3 1237.5,905.0 C1236.0,905.7 1224.2,908.6 1221.5,909.0 C1218.8,909.4 1194.3,912.3 1191.5,912.5 C1188.7,912.7 1175.2,913.1 1173.5,913.0 C1171.8,912.9 1163.1,911.7 1162.5,911.0 C1161.9,910.3 1161.9,901.9 1162.5,901.0 C1163.1,900.1 1172.3,895.7 1173.5,895.0 C1174.7,894.3 1182.5,889.8 1183.5,889.0 C1184.5,888.2 1190.4,881.8 1191.5,881.0 C1192.6,880.2 1199.9,874.4 1202.3,874.7Z" fill="url(#g19)"/><g clip-path="url(#cp19)"><rect x="1167.3" y="884.0" width="1.2" height="1.2" fill="#404830" opacity="0.7"/><rect x="1227.2" y="892.0" width="1.2" height="1.2" fill="#404830" opacity="0.7"/><rect x="1244.0" y="910.7" width="1.2" height="1.2" fill="#404830" opacity="0.7"/><rect x="1182.9" y="903.9" width="1.2" height="1.2" fill="#404830" opacity="0.7"/><rect x="1188.3" y="889.6" width="1.2" height="1.2" fill="#404830" opacity="0.7"/><rect x="1187.6" y="884.4" width="1.2" height="1.2" fill="#404830" opacity="0.7"/><rect x="1172.9" y="899.1" width="1.2" height="1.2" fill="#404830" opacity="0.7"/><rect x="1197.5" y="883.0" width="1.2" height="1.2" fill="#404830" opacity="0.7"/><rect x="1200.3" y="904.5" width="1.2" height="1.2" fill="#404830" opacity="0.7"/><rect x="1217.2" y="893.0" width="1.2" height="1.2" fill="#404830" opacity="0.7"/><rect x="1231.9" y="893.6" width="1.2" height="1.2" fill="#404830" opacity="0.7"/><rect x="1213.1" y="883.2" width="1.2" height="1.2" fill="#404830" opacity="0.7"/><rect x="1207.0" y="890.4" width="1.2" height="1.2" fill="#404830" opacity="0.7"/><rect x="1204.6" y="891.7" width="1.2" height="1.2" fill="#404830" opacity="0.7"/></g><path d="M1202.3,874.7 C1204.7,875.0 1229.9,885.2 1232.5,886.0 C1235.1,886.8 1246.2,888.4 1247.1,889.0 C1248.0,889.6 1247.7,896.1 1247.1,897.0 C1246.5,897.9 1239.0,904.3 1237.5,905.0 C1236.0,905.7 1224.2,908.6 1221.5,909.0 C1218.8,909.4 1194.3,912.3 1191.5,912.5 C1188.7,912.7 1175.2,913.1 1173.5,913.0 C1171.8,912.9 1163.1,911.7 1162.5,911.0 C1161.9,910.3 1161.9,901.9 1162.5,901.0 C1163.1,900.1 1172.3,895.7 1173.5,895.0 C1174.7,894.3 1182.5,889.8 1183.5,889.0 C1184.5,888.2 1190.4,881.8 1191.5,881.0 C1192.6,880.2 1199.9,874.4 1202.3,874.7Z" fill="none" stroke="#383838" stroke-width="1" stroke-opacity="0.75"/></svg>
<svg style="left:0;top:0" width="1920" height="1032"><path d="M656.5,368.2 C661.0,367.8 666.2,369.8 668.7,373.1 C671.1,376.3 671.5,382.7 671.1,387.7 C670.7,392.7 669.1,399.0 666.2,403.0 C663.4,406.9 659.0,409.6 654.0,411.6 C649.1,413.7 640.9,416.0 636.6,415.4 C632.2,414.8 628.9,411.7 627.9,408.0 C626.9,404.2 628.1,398.5 630.3,393.1 C632.6,387.7 637.2,379.7 641.6,375.5 C645.9,371.4 651.9,368.6 656.5,368.2Z" fill="url(#gi0)" stroke="#e8e000" stroke-width="1.1"/><path d="M621.2,387.3 C624.0,388.2 623.2,390.7 622.5,392.8 C621.8,394.9 619.1,397.8 617.0,400.1 C614.8,402.5 612.1,405.3 609.7,406.9 C607.2,408.4 605.2,408.9 602.3,409.3 C599.5,409.7 595.0,410.0 592.6,409.3 C590.1,408.6 587.4,408.0 587.7,405.0 C588.0,401.9 591.4,394.0 594.4,391.0 C597.5,388.1 601.5,387.9 606.0,387.3 C610.5,386.7 618.5,386.4 621.2,387.3Z" fill="url(#gi1)" stroke="#c81818" stroke-width="1.1"/><path d="M685.2,429.0 C687.5,429.3 689.0,430.4 690.3,432.7 C691.7,435.0 692.5,439.2 693.3,442.9 C694.0,446.6 695.6,452.3 694.7,454.6 C693.9,457.0 689.7,457.5 688.2,456.8 C686.6,456.1 686.9,451.7 685.2,450.2 C683.5,448.8 680.3,448.1 677.9,448.0 C675.4,447.9 672.8,450.1 670.6,449.5 C668.4,448.9 665.3,446.2 664.7,444.3 C664.1,442.5 665.0,440.7 666.9,438.5 C668.9,436.3 673.4,432.7 676.4,431.2 C679.5,429.6 682.9,428.8 685.2,429.0Z" fill="url(#gi2)" stroke="#c81818" stroke-width="1.1"/><path d="M586.7,436.0 C589.1,438.2 586.3,448.9 587.7,451.8 C589.0,454.8 593.1,451.3 594.5,453.8 C596.0,456.2 597.9,463.6 596.6,466.6 C595.3,469.5 590.3,470.4 586.7,471.5 C583.1,472.7 577.8,473.9 574.9,473.6 C571.9,473.2 570.9,471.9 568.9,469.6 C567.0,467.3 563.8,463.6 563.0,459.7 C562.2,455.8 562.3,449.4 564.0,445.9 C565.6,442.5 569.1,440.7 572.9,439.0 C576.7,437.4 584.2,433.9 586.7,436.0Z" fill="url(#gi3)" stroke="#c81818" stroke-width="1.1"/><path d="M654.7,449.6 C657.0,451.6 655.3,458.9 654.7,462.5 C654.1,466.2 653.1,468.9 651.1,471.2 C649.0,473.5 645.3,475.9 642.4,476.2 C639.5,476.6 635.8,475.5 633.7,473.4 C631.7,471.4 630.4,466.7 630.1,464.0 C629.9,461.2 630.4,459.1 632.2,456.8 C634.0,454.5 637.2,451.5 640.9,450.3 C644.6,449.1 652.4,447.5 654.7,449.6Z" fill="url(#gi4)" stroke="#c81818" stroke-width="1.1"/><path d="M686.2,470.6 C689.9,470.4 696.0,471.4 699.0,474.4 C702.0,477.3 703.7,483.1 704.1,488.4 C704.5,493.6 703.2,501.2 701.5,506.1 C699.8,511.0 696.2,515.7 693.9,517.6 C691.6,519.5 689.9,519.7 687.6,517.6 C685.3,515.5 682.1,509.5 680.0,504.9 C677.9,500.2 675.3,494.5 674.9,489.6 C674.4,484.7 675.5,478.8 677.4,475.6 C679.3,472.4 682.6,470.8 686.2,470.6Z" fill="url(#gi5)" stroke="#c81818" stroke-width="1.1"/><path d="M614.0,484.0 C614.7,484.4 615.0,486.6 615.6,488.0 C616.1,489.5 616.5,490.8 617.4,492.8 C618.2,494.8 621.5,497.4 620.6,499.9 C619.7,502.5 615.4,505.7 611.8,507.8 C608.3,509.9 603.4,511.7 599.1,512.6 C594.9,513.5 590.2,514.0 586.5,513.4 C582.8,512.7 579.4,511.0 577.0,508.6 C574.6,506.2 572.0,501.6 572.2,499.1 C572.5,496.6 576.4,495.0 578.5,493.6 C580.6,492.1 583.2,490.8 584.9,490.4 C586.5,490.1 587.0,491.0 588.3,491.3 C589.6,491.5 591.6,492.1 592.8,492.0 C594.0,491.9 594.0,490.6 595.3,490.5 C596.6,490.4 598.5,491.8 600.8,491.2 C603.0,490.7 606.8,488.2 608.6,487.2 C610.5,486.3 610.8,486.1 611.7,485.6 C612.6,485.1 613.4,483.6 614.0,484.0Z" fill="url(#gi6)" stroke="#c81818" stroke-width="1.1"/><path d="M644.6,509.7 C648.6,509.7 653.1,510.6 655.9,513.0 C658.7,515.4 660.5,519.4 661.5,524.2 C662.4,529.1 662.2,537.7 661.5,542.2 C660.7,546.6 659.0,550.0 657.0,551.1 C654.9,552.2 652.3,550.4 649.2,548.9 C646.0,547.4 642.0,543.9 637.9,542.2 C633.8,540.5 626.6,542.1 624.5,538.8 C622.5,535.4 624.3,526.3 625.6,522.0 C626.9,517.8 629.2,515.1 632.3,513.0 C635.5,511.0 640.7,509.7 644.6,509.7Z" fill="url(#gi7)" stroke="#c81818" stroke-width="1.1"/><path d="M571.8,522.3 C577.1,522.9 587.7,526.4 593.8,529.7 C599.9,532.9 605.0,537.8 608.4,541.9 C611.9,546.0 613.4,549.9 614.4,554.1 C615.4,558.4 617.1,565.2 614.4,567.5 C611.8,569.7 604.5,568.9 598.6,567.5 C592.7,566.0 585.2,561.8 579.1,558.9 C573.0,556.1 565.2,553.7 562.0,550.4 C558.7,547.2 559.6,543.6 559.6,539.5 C559.6,535.4 559.9,528.9 562.0,526.1 C564.0,523.2 566.5,521.7 571.8,522.3Z" fill="url(#gi8)" stroke="#c81818" stroke-width="1.1"/><path d="M667.8,551.9 C670.4,550.6 671.2,551.4 674.5,553.5 C677.9,555.6 686.0,561.5 688.1,564.5 C690.2,567.5 688.9,568.6 687.2,571.3 C685.6,574.0 681.2,578.5 677.9,580.6 C674.7,582.7 670.8,584.1 667.8,583.9 C664.9,583.8 661.7,582.1 660.2,579.7 C658.6,577.3 658.7,572.6 658.5,569.6 C658.4,566.5 657.8,564.1 659.4,561.2 C660.9,558.2 665.3,553.2 667.8,551.9Z" fill="url(#gi9)" stroke="#c81818" stroke-width="1.1"/><path d="M601.2,581.6 C604.9,582.4 610.0,588.5 612.4,594.4 C614.8,600.3 617.2,610.7 615.6,616.8 C613.9,623.0 607.1,627.3 602.8,631.4 C598.5,635.4 593.8,639.9 589.8,641.0 C585.8,642.1 581.2,640.8 578.6,637.8 C575.9,634.9 574.1,628.7 573.8,623.3 C573.6,617.9 574.3,611.2 577.0,605.6 C579.7,600.0 585.8,593.7 589.8,589.7 C593.8,585.7 597.4,580.8 601.2,581.6Z" fill="url(#gi10)" stroke="#c81818" stroke-width="1.1"/><path d="M647.5,603.7 C653.4,602.6 670.3,601.4 675.8,602.6 C681.3,603.8 679.9,607.0 680.5,610.9 C681.1,614.9 681.4,621.5 679.4,626.2 C677.4,631.0 673.4,636.1 668.7,639.2 C664.0,642.4 655.6,645.0 651.1,645.0 C646.6,645.0 643.5,643.2 641.6,639.2 C639.6,635.3 639.4,626.4 639.3,621.5 C639.1,616.5 639.0,612.6 640.4,609.6 C641.8,606.7 641.6,604.9 647.5,603.7Z" fill="url(#gi11)" stroke="#c81818" stroke-width="1.1"/><path d="M607.0,648.5 C609.2,647.9 612.4,648.2 616.4,649.5 C620.5,650.7 627.0,654.1 631.4,656.0 C635.8,657.9 639.8,658.7 642.6,660.7 C645.4,662.7 647.6,665.0 648.2,668.1 C648.9,671.3 648.5,676.7 646.3,679.4 C644.1,682.0 639.1,683.7 635.1,684.1 C631.0,684.4 626.4,683.2 622.0,681.3 C617.7,679.4 612.1,675.6 609.0,672.8 C605.9,670.0 604.3,667.7 603.4,664.5 C602.4,661.2 602.7,655.9 603.4,653.2 C604.0,650.6 604.9,649.2 607.0,648.5Z" fill="url(#gi12)" stroke="#c81818" stroke-width="1.1"/></svg>
<div class="a" style="left:1408px;top:58px;width:170px;height:867px;border:5px solid #ee1c24"></div>
<div class="t" style="left:840px;top:933px;font-size:13.7px;color:#000">Segmentation</div>
<div class="a" style="left:935px;top:927px;width:200px;height:26px;background:#fff;border:1px solid #7a7a7a"></div>
<div class="t" style="left:941px;top:934px;font-size:13px;color:#000">Sample - Nuts_Classification</div>
<svg style="left:0;top:0" width="1920" height="1032"><path d="M1116,936 L1128,936 L1122,944.2 Z" fill="#000"/><g fill="none" stroke="#000" stroke-width="2"><path d="M1795,932.5 V947.5 M1791.5,935.5 L1795,932 L1798.5,935.5 M1791.5,944.5 L1795,948 L1798.5,944.5"/><path d="M1821.5,940 H1837 M1824.8,936.6 L1821.4,940 L1824.8,943.4 M1833.7,936.6 L1837.1,940 L1833.7,943.4"/><path d="M1855,931 V949 M1871,931 V949"/></g><g fill="#000"><rect x="1858.2" y="939" width="2" height="2"/><rect x="1862" y="939" width="2" height="2"/><rect x="1865.8" y="939" width="2" height="2"/></g></svg>
<div class="a" style="left:60px;top:967px;width:425px;height:65px;background:linear-gradient(#c8c8c8,#f4f4f4)"></div>
<div class="a" style="left:500px;top:967px;width:1420px;height:65px;background:linear-gradient(#c8c8c8,#f4f4f4)"></div>
<div class="c" style="left:34px;top:1007px;width:100px;font-size:12px;color:#000">Add</div>
<div class="c" style="left:83px;top:1007px;width:100px;font-size:12px;color:#000">Duplicate</div>
<div class="c" style="left:142px;top:1007px;width:100px;font-size:12px;color:#000">Remove</div>
<div class="c" style="left:400px;top:1007px;width:100px;font-size:12px;color:#000">Open</div>
<div class="c" style="left:487px;top:1007px;width:160px;font-size:12.3px;color:#000">Go to measurement</div>
<div class="c" style="left:619px;top:1007px;width:160px;font-size:12.3px;color:#000">Add Sample model</div>
<div class="c" style="left:731px;top:1007px;width:160px;font-size:12.3px;color:#000">Add Variable or Id</div>
<div class="c" style="left:846px;top:1007px;width:160px;font-size:12.3px;color:#000">Apply Changes</div>
<div class="a" style="left:634px;top:979px;width:1px;height:40px;background:#909090"></div>
<div class="a" style="left:872px;top:979px;width:1px;height:40px;background:#909090"></div>
<svg style="left:0;top:0" width="1920" height="1032"><g fill="none" stroke="#000" stroke-width="2" stroke-linejoin="round"><path d="M75.2,997.8 V985 Q75.2,983.8 76.4,983.8 H81.5 L83.5,986 H91.7 Q92.9,986 92.9,987.2 V996.6 Q92.9,997.8 91.7,997.8 Z"/><path d="M86.9,988.8 V994.8 M83.9,991.8 H89.9" stroke-width="2.3"/><path d="M123.7,985.2 V998.8 H140.8"/><path d="M127.3,994.7 V983.2 Q127.3,982 128.5,982 H132.2 L134.2,984.8 H141.3 Q142.5,984.8 142.5,986 V993.5 Q142.5,994.7 141.3,994.7 Z"/><path d="M184.1,984 H200"/><path d="M189.2,982.6 H195" stroke-width="2.4"/><path d="M186.3,984 V997.4 Q186.3,998.6 187.5,998.6 H196.5 Q197.7,998.6 197.7,997.4 V984"/><path d="M190.3,987 V995.6 M194.1,987 V995.6" stroke-width="2"/><path d="M441,998 V985.2 Q441,984 442.2,984 H448 L449.6,986 H459.8"/><path d="M441.5,998 L444.8,990 H461 L457.8,998 Z"/><path d="M559.3,987.5 V984.8 Q559.3,983.6 560.5,983.6 H573.3 Q574.5,983.6 574.5,984.8 V997.3 Q574.5,998.5 573.3,998.5 H560.5 Q559.3,998.5 559.3,997.3 V994.5"/><path d="M558,991.2 H569.5 M566,987.6 L569.6,991.2 L566,994.8"/><path d="M698.5,998.5 H692 Q690.8,998.5 690.8,997.3 V984.8 Q690.8,983.6 692,983.6 H705.7 Q706.9,983.6 706.9,984.8 V993"/><path d="M699,986.6 V994.6 M695,990.6 H703" stroke-width="2.2"/><path d="M700,998 H708 M705.5,995.5 L708.2,998 L705.5,1000.5" stroke-width="1.8"/><path d="M813,994.5 H803 V986.8 H819 V990"/><path d="M819,991.5 V998.5 M815,994.8 H823" stroke-width="2.2"/><path d="M921.5,983.4 A8.6,8.6 0 0 0 924.5,999.6"/><path d="M928,982 A8.6,8.6 0 0 1 931.8,997.6"/><path d="M917,982.2 H922.6 V986.8" stroke-width="1.9"/><path d="M929.2,999.6 H934.6 V995" stroke-width="1.9"/><path d="M920.8,990.6 L924.2,994 L930.8,987.4"/></g></svg>
<div class="a" style="left:1808px;top:974px;width:100px;height:50px;border-radius:9px;background:#9e7ba6"></div>
<svg style="left:0;top:0" width="1920" height="1032"><rect x="1847.5" y="983.5" width="12" height="13" rx="1.5" fill="none" stroke="#fff" stroke-width="2"/><path d="M1861,987 L1866,984 V996 L1861,993 Z" fill="#fff"/></svg>
<div class="c" style="left:1808px;top:1006px;width:100px;font-size:12px;color:#fff">Recorder</div>
</body></html>
